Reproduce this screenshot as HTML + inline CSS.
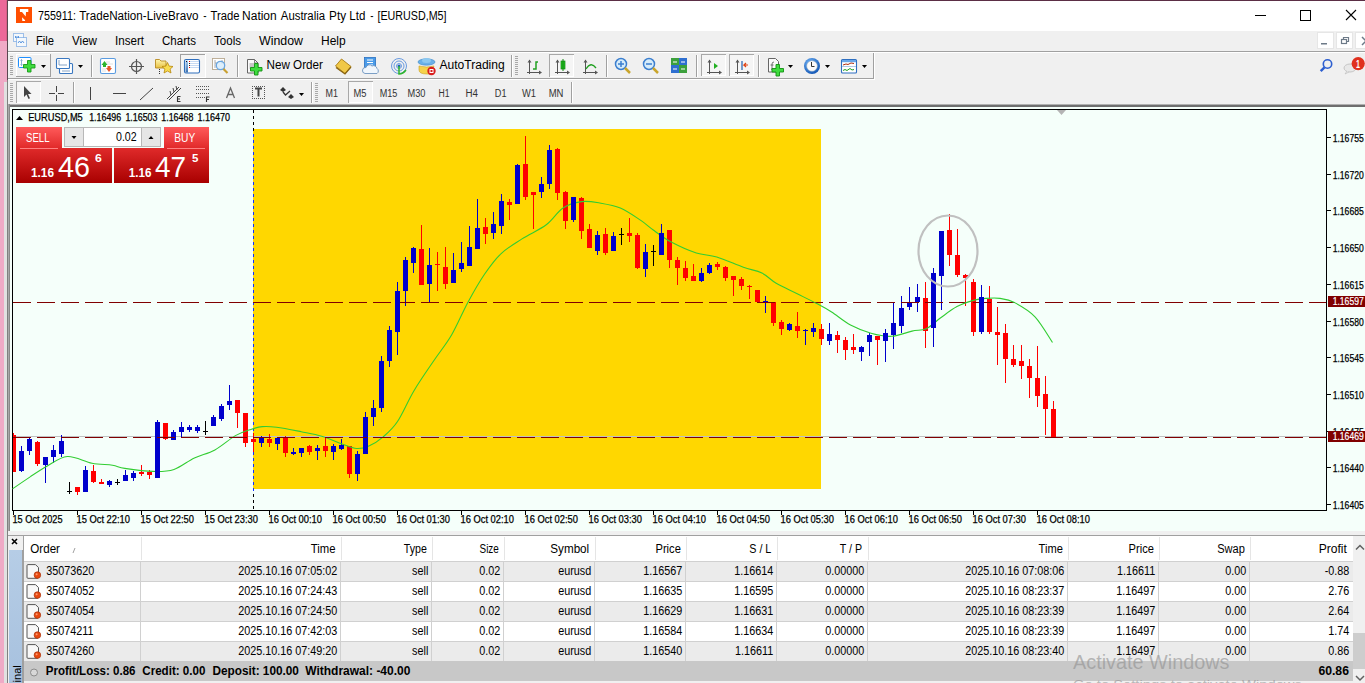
<!DOCTYPE html>
<html><head><meta charset="utf-8"><title>MT4</title><style>html,body{margin:0;padding:0;width:1365px;height:683px;overflow:hidden;background:#F0F0F0}svg{display:block}text{font-family:"Liberation Sans",sans-serif}</style></head><body>
<svg width="1365" height="683" viewBox="0 0 1365 683" font-family="Liberation Sans, sans-serif">
<rect x="0" y="0" width="1365" height="683" fill="#F0F0F0"/>
<rect x="0" y="0" width="7" height="683" fill="#EFAAC6"/>
<rect x="0" y="0" width="7" height="41" fill="#EC6899"/>
<rect x="6" y="0" width="1" height="41" fill="#D86088"/>
<rect x="4" y="82" width="3" height="601" fill="#E1E1E1"/>
<rect x="7" y="0" width="1358" height="1" fill="#5B2E45"/>
<rect x="7" y="0" width="1" height="80" fill="#5A4650"/>
<rect x="7" y="80" width="1" height="603" fill="#808080"/>
<rect x="8" y="1" width="1357" height="30" fill="#FFFFFF"/>
<rect x="16" y="7" width="16" height="16" fill="#FF4E00"/>
<path d="M19.9 9.1 H28.3 V11.9 H26 L25.7 16.4 L22 11.9 H19.9 Z M22 17.2 L25.2 20.2 L24.9 21.1 H22.3 Z" fill="#FFFFFF"/>
<text x="38.00" y="20" font-size="12" fill="#000" textLength="37.89" lengthAdjust="spacingAndGlyphs">755911:</text>
<text x="79.20" y="20" font-size="12" fill="#000" textLength="119.24" lengthAdjust="spacingAndGlyphs">TradeNation-LiveBravo</text>
<text x="203.20" y="20" font-size="12" fill="#000" textLength="3.30" lengthAdjust="spacingAndGlyphs">-</text>
<text x="210.50" y="20" font-size="12" fill="#000" textLength="29.00" lengthAdjust="spacingAndGlyphs">Trade</text>
<text x="242.10" y="20" font-size="12" fill="#000" textLength="34.59" lengthAdjust="spacingAndGlyphs">Nation</text>
<text x="280.80" y="20" font-size="12" fill="#000" textLength="44.29" lengthAdjust="spacingAndGlyphs">Australia</text>
<text x="329.10" y="20" font-size="12" fill="#000" textLength="16.94" lengthAdjust="spacingAndGlyphs">Pty</text>
<text x="349.30" y="20" font-size="12" fill="#000" textLength="16.08" lengthAdjust="spacingAndGlyphs">Ltd</text>
<text x="370.20" y="20" font-size="12" fill="#000" textLength="3.20" lengthAdjust="spacingAndGlyphs">-</text>
<text x="377.50" y="20" font-size="12" fill="#000" textLength="69.04" lengthAdjust="spacingAndGlyphs">[EURUSD,M5]</text>
<rect x="1255" y="15" width="11" height="1" fill="#000"/>
<rect x="1300.5" y="10.5" width="10" height="10" fill="none" stroke="#000" stroke-width="1"/>
<path d="M1346 10 L1356 20 M1356 10 L1346 20" stroke="#000" stroke-width="1.1"/>
<rect x="8" y="31" width="1357" height="20" fill="#F0F0F0"/>
<text x="36.00" y="45" font-size="12" fill="#000" textLength="18.03" lengthAdjust="spacingAndGlyphs">File</text>
<text x="72.00" y="45" font-size="12" fill="#000" textLength="24.99" lengthAdjust="spacingAndGlyphs">View</text>
<text x="115.00" y="45" font-size="12" fill="#000" textLength="29.01" lengthAdjust="spacingAndGlyphs">Insert</text>
<text x="162.00" y="45" font-size="12" fill="#000" textLength="34.04" lengthAdjust="spacingAndGlyphs">Charts</text>
<text x="214.00" y="45" font-size="12" fill="#000" textLength="27.01" lengthAdjust="spacingAndGlyphs">Tools</text>
<text x="259.00" y="45" font-size="12" fill="#000" textLength="43.98" lengthAdjust="spacingAndGlyphs">Window</text>
<text x="321.00" y="45" font-size="12" fill="#000" textLength="24.68" lengthAdjust="spacingAndGlyphs">Help</text>
<g fill="none" stroke="#4A8BDB" stroke-width="1" stroke-dasharray="1 1"><rect x="13.5" y="33.5" width="10" height="8" fill="#F4F8FC"/><rect x="16.5" y="37.5" width="10" height="9" fill="#F4F8FC"/></g>
<path d="M18 43 l1.5 -2 l1.5 2 l1.5 -2 l1.5 2" stroke="#4A8BDB" fill="none" stroke-width="0.9"/><path d="M15 37 h4 M16 36 l-1 1 l1 1 M18 36 l1 1 l-1 1" stroke="#4A8BDB" fill="none" stroke-width="0.8"/>
<rect x="1317.5" y="32.5" width="16" height="16" fill="#FFFFFF" stroke="#E6E6E6"/>
<rect x="1336.5" y="32.5" width="16" height="16" fill="#FFFFFF" stroke="#E6E6E6"/>
<rect x="1355.5" y="32.5" width="16" height="16" fill="#FFFFFF" stroke="#E6E6E6"/>
<rect x="1321" y="43" width="6" height="1.5" fill="#6D7A88"/>
<g fill="none" stroke="#6D7A88" stroke-width="1.2"><rect x="1341.5" y="39.5" width="5" height="4"/><path d="M1343.5 39.5 v-2 h5 v4 h-2"/></g>
<path d="M1362 37 l4 4 l-4 4" stroke="#6D7A88" stroke-width="1.5" fill="none"/>
<rect x="8" y="51" width="1357" height="1" fill="#A0A0A0"/>
<rect x="8" y="52" width="1357" height="1" fill="#FFFFFF"/>
<rect x="8" y="78" width="866" height="1" fill="#A0A0A0"/>
<rect x="8" y="79" width="867" height="1" fill="#FFFFFF"/>
<rect x="873" y="53" width="1" height="26" fill="#A0A0A0"/>
<rect x="874" y="53" width="1" height="26" fill="#FFFFFF"/>
<rect x="10" y="56" width="3" height="1" fill="#A8A8A8"/><rect x="10" y="58" width="3" height="1" fill="#A8A8A8"/><rect x="10" y="60" width="3" height="1" fill="#A8A8A8"/><rect x="10" y="62" width="3" height="1" fill="#A8A8A8"/><rect x="10" y="64" width="3" height="1" fill="#A8A8A8"/><rect x="10" y="66" width="3" height="1" fill="#A8A8A8"/><rect x="10" y="68" width="3" height="1" fill="#A8A8A8"/><rect x="10" y="70" width="3" height="1" fill="#A8A8A8"/><rect x="10" y="72" width="3" height="1" fill="#A8A8A8"/><rect x="10" y="74" width="3" height="1" fill="#A8A8A8"/>
<rect x="16" y="54" width="35" height="23" fill="#A0A0A0"/><rect x="16" y="54" width="34" height="22" fill="#FFFFFF"/><rect x="17" y="55" width="33" height="21" fill="#F0F0F0"/>
<rect x="18.5" y="57.5" width="12.5" height="10" rx="1" fill="#fff" stroke="#1E8FFF"/><path d="M21.5 59.5 v6 M20.5 60.5 l1 -1 l1 1 M20.5 64.5 l1 1 l1 -1" stroke="#7FA8D0" fill="none" stroke-width="0.9"/>
<path d="M27.5 60.5 h3.5 v4 h4 v3.5 h-4 v4 h-3.5 v-4 h-4 v-3.5 h4 z" fill="#3EDC3E" stroke="#179A17" stroke-width="0.9"/>
<path d="M41 65 h5 l-2.5 3 z" fill="#000"/>
<rect x="59.5" y="63.5" width="13" height="10" rx="1" fill="#fff" stroke="#3B78C0" stroke-width="1.1"/><rect x="56.5" y="58.5" width="13" height="10" rx="1" fill="#fff" stroke="#3B78C0" stroke-width="1.1"/>
<path d="M59 60 v5 M59 65 h8 M62 71 h8" stroke="#7A9BC0" stroke-width="0.9" fill="none"/>
<path d="M78 65 h5 l-2.5 3 z" fill="#000"/>
<rect x="91" y="55" width="1" height="22" fill="#A0A0A0"/><rect x="92" y="55" width="1" height="22" fill="#FFFFFF"/>
<rect x="100.5" y="58.5" width="15" height="15" rx="1.5" fill="#fff" stroke="#5A9BE0" stroke-width="1.1"/><path d="M106 62 h4 M106 64 h7 M102 69 h4 M102 71 h4" stroke="#D8D8D8" stroke-width="0.8"/><path d="M101.5 65 l3 -4 l3 4 h-1.5 v2 h-3 v-2 z" fill="#2DB52D"/><path d="M106 68 h1.5 v-2 h3 v2 h1.5 l-3 4 z" fill="#E8572A"/>
<g stroke="#555" fill="none" stroke-width="1.2"><circle cx="136.5" cy="66.5" r="5"/><path d="M136.5 59 v15 M129 66.5 h15"/></g>
<defs><linearGradient id="fold" x1="0" y1="0" x2="0" y2="1"><stop offset="0" stop-color="#FFF6B0"/><stop offset="1" stop-color="#E8C040"/></linearGradient></defs>
<path d="M155.5 59.5 h4 l1.5 1.5 h5 v7 h-10.5 z" fill="url(#fold)" stroke="#B88A20" stroke-width="0.9"/>
<g fill="#333"><rect x="159" y="69" width="1" height="1"/><rect x="159" y="71" width="1" height="1"/><rect x="159" y="73" width="1" height="1"/></g>
<path d="M167.5 62.5 l1.6 3.6 3.9 .4 -2.9 2.6 .9 3.9 -3.5 -2 -3.5 2 .9 -3.9 -2.9 -2.6 3.9 -.4 z" fill="#F8DC50" stroke="#B8860B" stroke-width="0.8"/>
<rect x="180" y="54" width="25" height="23" fill="#F4F4F4"/><rect x="180" y="54" width="25" height="1" fill="#A0A0A0"/><rect x="180" y="54" width="1" height="23" fill="#A0A0A0"/><rect x="205" y="54" width="1" height="23" fill="#FFFFFF"/><rect x="180" y="77" width="26" height="1" fill="#FFFFFF"/>
<defs><linearGradient id="dwl" x1="0" y1="0" x2="0" y2="1"><stop offset="0" stop-color="#A8CCF0"/><stop offset="1" stop-color="#3A70B0"/></linearGradient></defs>
<rect x="184.5" y="59.5" width="15" height="13.5" rx="1.5" fill="#fff" stroke="#2F6EBB" stroke-width="1.1"/><rect x="185.5" y="60.5" width="2.5" height="12" fill="url(#dwl)"/>
<path d="M190 61.5 h9 M190 63.5 h9 M190 65.5 h9 M190 67.5 h9" stroke="#B8D0F0" stroke-width="0.8"/>
<g><rect x="189" y="61" width="1" height="1" fill="#E00"/><rect x="189" y="63" width="1" height="1" fill="#222"/><rect x="189" y="65" width="1" height="1" fill="#222"/><rect x="189" y="67" width="1" height="1" fill="#E00"/><rect x="186" y="61" width="1" height="1" fill="#111"/></g>
<rect x="212.5" y="58.5" width="12" height="11" fill="#fff" stroke="#B8A890" stroke-width="0.9"/><path d="M215 60 v8 M215 63 h3 M222 60 v4" stroke="#999" stroke-width="0.8"/>
<circle cx="220.5" cy="65.5" r="4.2" fill="#D8ECFA" fill-opacity="0.85" stroke="#6AA6E0" stroke-width="1.3"/><path d="M223.5 69 l4 4" stroke="#C8A030" stroke-width="2.2"/>
<rect x="237" y="55" width="1" height="22" fill="#A0A0A0"/><rect x="238" y="55" width="1" height="22" fill="#FFFFFF"/>
<path d="M247.5 59.5 h7 l3.5 3.5 v10 h-10.5 z" fill="#FAFAFA" stroke="#666" stroke-width="1"/><path d="M254.5 59.5 v3.5 h3.5" fill="none" stroke="#666" stroke-width="0.8"/><path d="M249.5 64 h5 M249.5 66 h5 M249.5 68 h3" stroke="#777" stroke-width="0.8"/>
<path d="M254.5 63.5 h3.5 v4 h4 v3.5 h-4 v4 h-3.5 v-4 h-4 v-3.5 h4 z" fill="#3EDC3E" stroke="#129012" stroke-width="0.9"/>
<text x="266.50" y="68.5" font-size="12" fill="#000" textLength="56.41" lengthAdjust="spacingAndGlyphs">New Order</text>
<path d="M335.5 66 l6 -7 l9.5 7.5 l-6 7 z" fill="#F0C848" stroke="#A87C14" stroke-width="0.9"/><path d="M336 67.5 l9 6.5 l6 -7" fill="none" stroke="#8A6410" stroke-width="1.2"/>
<rect x="364.5" y="57.5" width="11" height="11" fill="#4A9BE8" stroke="#2A70C0" stroke-width="0.8"/><path d="M367 60 h6 M367 62.5 h6 M369 65 h4" stroke="#fff" stroke-width="1"/>
<path d="M365 73.5 h12 a3 3 0 0 0 0 -5 a3.5 3.5 0 0 0 -5 -2.5 a3.5 3.5 0 0 0 -6 1.5 a3 3 0 0 0 -1 6 z" fill="#F0F6FC" stroke="#6E95BF" stroke-width="0.9"/>
<g fill="none" stroke="#6A9BE0" stroke-width="1"><circle cx="399" cy="66" r="7.5"/><circle cx="399" cy="66" r="5"/><circle cx="399" cy="66" r="2.5"/></g><circle cx="399" cy="66" r="1.5" fill="#2060C0"/><path d="M399 66 v8 q4 0 7 -4" stroke="#2DB52D" stroke-width="1.5" fill="none"/>
<path d="M419 70 q0 4 8 4 h4 l3 -8 q-7 2 -15 0 z" fill="#F6D24A" stroke="#C8A020" stroke-width="0.6"/><ellipse cx="426.5" cy="62" rx="8.5" ry="3.2" fill="#6AB0E8" stroke="#3C88C8" stroke-width="0.6"/><ellipse cx="426.5" cy="60.5" rx="4.5" ry="2.5" fill="#8CC8F0"/>
<circle cx="431.5" cy="71" r="4.2" fill="#D81E1E"/><rect x="429.5" y="69" width="4" height="4" fill="#fff"/><rect x="430.5" y="70" width="2" height="2" fill="#D81E1E"/>
<text x="439.40" y="68.5" font-size="12" fill="#000" textLength="65.33" lengthAdjust="spacingAndGlyphs">AutoTrading</text>
<rect x="511" y="55" width="1" height="22" fill="#A0A0A0"/><rect x="512" y="55" width="1" height="22" fill="#FFFFFF"/>
<rect x="515" y="56" width="3" height="1" fill="#A8A8A8"/><rect x="515" y="58" width="3" height="1" fill="#A8A8A8"/><rect x="515" y="60" width="3" height="1" fill="#A8A8A8"/><rect x="515" y="62" width="3" height="1" fill="#A8A8A8"/><rect x="515" y="64" width="3" height="1" fill="#A8A8A8"/><rect x="515" y="66" width="3" height="1" fill="#A8A8A8"/><rect x="515" y="68" width="3" height="1" fill="#A8A8A8"/><rect x="515" y="70" width="3" height="1" fill="#A8A8A8"/><rect x="515" y="72" width="3" height="1" fill="#A8A8A8"/><rect x="515" y="74" width="3" height="1" fill="#A8A8A8"/>
<g shape-rendering="crispEdges"><rect x="529" y="60" width="1" height="14" fill="#555"/><rect x="527" y="72" width="14" height="1" fill="#555"/></g><path d="M529.5 59.5 l-2 3 h4 z M542 72.5 l-3 -2 v4 z" fill="#555"/><path d="M533 69 h3 v-7 h2" stroke="#20A020" stroke-width="1.5" fill="none"/>
<rect x="549" y="54" width="25" height="23" fill="#F5F5F5"/><rect x="549" y="54" width="25" height="1" fill="#A8A8A8"/><rect x="549" y="54" width="1" height="23" fill="#A8A8A8"/><rect x="573" y="55" width="1" height="22" fill="#FFFFFF"/><rect x="550" y="76" width="24" height="1" fill="#FFFFFF"/>
<g shape-rendering="crispEdges"><rect x="557" y="60" width="1" height="14" fill="#555"/><rect x="555" y="72" width="14" height="1" fill="#555"/></g><path d="M557.5 59.5 l-2 3 h4 z M570 72.5 l-3 -2 v4 z" fill="#555"/><rect x="561" y="61" width="4" height="8" fill="#22C022" stroke="#118811" stroke-width="0.7"/><path d="M563 59 v12" stroke="#118811"/>
<g shape-rendering="crispEdges"><rect x="585" y="60" width="1" height="14" fill="#555"/><rect x="583" y="72" width="14" height="1" fill="#555"/></g><path d="M585.5 59.5 l-2 3 h4 z M598 72.5 l-3 -2 v4 z" fill="#555"/><path d="M586 69 q5 -8 10 -1" stroke="#20A020" stroke-width="1.3" fill="none"/>
<rect x="606" y="55" width="1" height="22" fill="#A0A0A0"/><rect x="607" y="55" width="1" height="22" fill="#FFFFFF"/>
<circle cx="621" cy="64" r="5.5" fill="#D6ECFA" stroke="#3C7FCF" stroke-width="1.5"/><path d="M618 64 h6 M621 61 v6" stroke="#3C7FCF" stroke-width="1.5"/><path d="M625 68 l5 5" stroke="#C9A52C" stroke-width="2.5"/>
<circle cx="649" cy="64" r="5.5" fill="#D6ECFA" stroke="#3C7FCF" stroke-width="1.5"/><path d="M646 64 h6" stroke="#3C7FCF" stroke-width="1.5"/><path d="M653 68 l5 5" stroke="#C9A52C" stroke-width="2.5"/>
<rect x="671" y="58" width="8" height="7" fill="#3CA03C"/><rect x="679" y="58" width="8" height="7" fill="#2E6FD0"/><rect x="671" y="65" width="8" height="8" fill="#2E6FD0"/><rect x="679" y="65" width="8" height="8" fill="#3CA03C"/>
<path d="M673 62 h4 M681 62 h4 M673 69 h4 M681 69 h4" stroke="#fff" stroke-width="1.2"/>
<rect x="696" y="55" width="1" height="22" fill="#A0A0A0"/><rect x="697" y="55" width="1" height="22" fill="#FFFFFF"/>
<rect x="701" y="54" width="25" height="22" fill="#F5F5F5"/><rect x="701" y="54" width="25" height="1" fill="#A8A8A8"/><rect x="701" y="54" width="1" height="22" fill="#A8A8A8"/><rect x="725" y="55" width="1" height="21" fill="#FFFFFF"/><rect x="702" y="75" width="24" height="1" fill="#FFFFFF"/>
<g shape-rendering="crispEdges"><rect x="709" y="60" width="1" height="14" fill="#555"/><rect x="707" y="72" width="14" height="1" fill="#555"/></g><path d="M709.5 59.5 l-2 3 h4 z M722 72.5 l-3 -2 v4 z" fill="#555"/><path d="M714 63 l4 3 l-4 3 z" fill="#22B022"/>
<rect x="729" y="54" width="25" height="22" fill="#F5F5F5"/><rect x="729" y="54" width="25" height="1" fill="#A8A8A8"/><rect x="729" y="54" width="1" height="22" fill="#A8A8A8"/><rect x="753" y="55" width="1" height="21" fill="#FFFFFF"/><rect x="730" y="75" width="24" height="1" fill="#FFFFFF"/>
<g shape-rendering="crispEdges"><rect x="737" y="60" width="1" height="14" fill="#555"/><rect x="735" y="72" width="14" height="1" fill="#555"/></g><path d="M737.5 59.5 l-2 3 h4 z M750 72.5 l-3 -2 v4 z" fill="#555"/><path d="M742 61 v9" stroke="#2060B0" stroke-width="1.2"/><path d="M748 65 h-4 l2 -2 M744 65 l2 2" stroke="#E04010" stroke-width="1.2" fill="none"/>
<rect x="758" y="55" width="1" height="22" fill="#A0A0A0"/><rect x="759" y="55" width="1" height="22" fill="#FFFFFF"/>
<path d="M768.5 58.5 h7 l3 3 v10.5 h-10 z" fill="#FAFAFA" stroke="#666" stroke-width="1"/><path d="M771 70 q1 0 1 -2 v-4 q0 -2 2 -2 M770.5 65 h3" stroke="#555" stroke-width="0.8" fill="none"/>
<path d="M776 64.5 h3.5 v4 h4 v3.5 h-4 v4 h-3.5 v-4 h-4 v-3.5 h4 z" fill="#3EDC3E" stroke="#129012" stroke-width="0.9"/>
<path d="M788 65 h5 l-2.5 3 z" fill="#000"/>
<defs><radialGradient id="clk" cx="0.4" cy="0.35" r="0.7"><stop offset="0" stop-color="#7FC0FF"/><stop offset="1" stop-color="#0A4FB0"/></radialGradient></defs>
<circle cx="812" cy="66" r="8" fill="url(#clk)"/><circle cx="812" cy="66" r="5.3" fill="#FAFAFA" stroke="#9AB" stroke-width="0.5"/><path d="M811.5 62 v4.5 h3" stroke="#333" stroke-width="1" fill="none"/>
<path d="M825 65 h5 l-2.5 3 z" fill="#000"/>
<rect x="841.5" y="59.5" width="15" height="13.5" rx="1" fill="#fff" stroke="#2E6FC0" stroke-width="1.1"/><rect x="842" y="60" width="14" height="2.2" fill="#6AA8EA"/><path d="M842 66.5 h14" stroke="#9BBCE0" stroke-width="0.8"/>
<path d="M843 65 l3 -1 l2 .5 l3 -1.5 l3 .5" stroke="#B03010" fill="none" stroke-width="1"/><path d="M843 70.5 l2 -1 l2 1 l3 -2 l2 1.5 l2 -.5" stroke="#20A020" fill="none" stroke-width="1"/>
<path d="M862 65 h5 l-2.5 3 z" fill="#000"/>
<circle cx="1327.5" cy="64" r="4.2" fill="none" stroke="#2D5FD0" stroke-width="1.6"/><path d="M1324.5 67.3 l-3.8 3.8" stroke="#2D5FD0" stroke-width="2.4"/>
<ellipse cx="1350" cy="68" rx="6" ry="4" fill="#E8E8E8" stroke="#BBB" stroke-width="0.8"/><path d="M1347 71 l-2 3 l4 -2" fill="#E8E8E8" stroke="#BBB" stroke-width="0.6"/><circle cx="1358.2" cy="63.6" r="6.6" fill="#E0301E"/>
<text x="1356.00" y="68" font-size="10" font-weight="bold" fill="#fff" textLength="3.97" lengthAdjust="spacingAndGlyphs">1</text>
<rect x="10" y="83" width="3" height="1" fill="#A8A8A8"/><rect x="10" y="85" width="3" height="1" fill="#A8A8A8"/><rect x="10" y="87" width="3" height="1" fill="#A8A8A8"/><rect x="10" y="89" width="3" height="1" fill="#A8A8A8"/><rect x="10" y="91" width="3" height="1" fill="#A8A8A8"/><rect x="10" y="93" width="3" height="1" fill="#A8A8A8"/><rect x="10" y="95" width="3" height="1" fill="#A8A8A8"/><rect x="10" y="97" width="3" height="1" fill="#A8A8A8"/><rect x="10" y="99" width="3" height="1" fill="#A8A8A8"/><rect x="10" y="101" width="3" height="1" fill="#A8A8A8"/>
<rect x="16" y="81" width="25" height="22" fill="#F5F5F5"/><rect x="16" y="81" width="25" height="1" fill="#A8A8A8"/><rect x="16" y="81" width="1" height="22" fill="#A8A8A8"/><rect x="40" y="82" width="1" height="21" fill="#FFFFFF"/><rect x="17" y="102" width="24" height="1" fill="#FFFFFF"/>
<path d="M24 86 v11 l2.5 -2.5 l2 4.5 l1.5 -0.8 l-2 -4.3 h3.5 z" fill="#444"/>
<path d="M49 93.5 h6 M58 93.5 h6 M56.5 86 v6 M56.5 95 v6" stroke="#444" stroke-width="1"/>
<rect x="73" y="82" width="1" height="21" fill="#A0A0A0"/><rect x="74" y="82" width="1" height="21" fill="#FFFFFF"/>
<rect x="90" y="87" width="1" height="13" fill="#444"/>
<rect x="113" y="93" width="13" height="1" fill="#444"/>
<path d="M140 100 l13 -12" stroke="#444" stroke-width="1"/>
<g shape-rendering="crispEdges"><rect x="167" y="98" width="1" height="1" fill="#444"/><rect x="169" y="99" width="1" height="1" fill="#444"/><rect x="168" y="97" width="1" height="1" fill="#444"/><rect x="170" y="98" width="1" height="1" fill="#444"/><rect x="169" y="96" width="1" height="1" fill="#444"/><rect x="171" y="97" width="1" height="1" fill="#444"/><rect x="170" y="95" width="1" height="1" fill="#444"/><rect x="172" y="96" width="1" height="1" fill="#444"/><rect x="171" y="94" width="1" height="1" fill="#444"/><rect x="173" y="95" width="1" height="1" fill="#444"/><rect x="172" y="93" width="1" height="1" fill="#444"/><rect x="174" y="94" width="1" height="1" fill="#444"/><rect x="173" y="92" width="1" height="1" fill="#444"/><rect x="175" y="93" width="1" height="1" fill="#444"/><rect x="174" y="91" width="1" height="1" fill="#444"/><rect x="176" y="92" width="1" height="1" fill="#444"/><rect x="175" y="90" width="1" height="1" fill="#444"/><rect x="177" y="91" width="1" height="1" fill="#444"/><rect x="176" y="89" width="1" height="1" fill="#444"/><rect x="178" y="90" width="1" height="1" fill="#444"/><rect x="177" y="88" width="1" height="1" fill="#444"/><rect x="179" y="89" width="1" height="1" fill="#444"/><rect x="178" y="87" width="1" height="1" fill="#444"/><rect x="180" y="88" width="1" height="1" fill="#444"/></g>
<path d="M170 91 l1 4 M173 88 l1 4 M176 86 l1 4" stroke="#444" stroke-width="1"/>
<path d="M177.5 96.5 h3 M177.5 96.5 v5 h3 M177.5 99 h2.5" stroke="#333" stroke-width="1.1" fill="none"/>
<g shape-rendering="crispEdges" fill="#555"><rect x="196" y="86" width="1" height="1"/><rect x="198" y="86" width="1" height="1"/><rect x="200" y="86" width="1" height="1"/><rect x="202" y="86" width="1" height="1"/><rect x="204" y="86" width="1" height="1"/><rect x="206" y="86" width="1" height="1"/><rect x="208" y="86" width="1" height="1"/><rect x="196" y="89" width="1" height="1"/><rect x="198" y="89" width="1" height="1"/><rect x="200" y="89" width="1" height="1"/><rect x="202" y="89" width="1" height="1"/><rect x="204" y="89" width="1" height="1"/><rect x="206" y="89" width="1" height="1"/><rect x="208" y="89" width="1" height="1"/><rect x="196" y="93" width="1" height="1"/><rect x="198" y="93" width="1" height="1"/><rect x="200" y="93" width="1" height="1"/><rect x="202" y="93" width="1" height="1"/><rect x="204" y="93" width="1" height="1"/><rect x="206" y="93" width="1" height="1"/><rect x="208" y="93" width="1" height="1"/><rect x="196" y="97" width="1" height="1"/><rect x="198" y="97" width="1" height="1"/><rect x="200" y="97" width="1" height="1"/><rect x="202" y="97" width="1" height="1"/><rect x="204" y="97" width="1" height="1"/></g>
<path d="M206.5 102 v-5 h3 M206.5 99.5 h2.5" stroke="#333" stroke-width="1.1" fill="none"/>
<path d="M226.5 98 l4 -10 l4 10 M228 94.5 h5" stroke="#666" stroke-width="1.3" fill="none"/>
<g shape-rendering="crispEdges" fill="#555"><rect x="252" y="86" width="1" height="1"/><rect x="252" y="98" width="1" height="1"/><rect x="252" y="86" width="1" height="1"/><rect x="264" y="86" width="1" height="1"/><rect x="254" y="86" width="1" height="1"/><rect x="254" y="98" width="1" height="1"/><rect x="252" y="88" width="1" height="1"/><rect x="264" y="88" width="1" height="1"/><rect x="256" y="86" width="1" height="1"/><rect x="256" y="98" width="1" height="1"/><rect x="252" y="90" width="1" height="1"/><rect x="264" y="90" width="1" height="1"/><rect x="258" y="86" width="1" height="1"/><rect x="258" y="98" width="1" height="1"/><rect x="252" y="92" width="1" height="1"/><rect x="264" y="92" width="1" height="1"/><rect x="260" y="86" width="1" height="1"/><rect x="260" y="98" width="1" height="1"/><rect x="252" y="94" width="1" height="1"/><rect x="264" y="94" width="1" height="1"/><rect x="262" y="86" width="1" height="1"/><rect x="262" y="98" width="1" height="1"/><rect x="252" y="96" width="1" height="1"/><rect x="264" y="96" width="1" height="1"/><rect x="264" y="86" width="1" height="1"/><rect x="264" y="98" width="1" height="1"/><rect x="252" y="98" width="1" height="1"/><rect x="264" y="98" width="1" height="1"/></g>
<path d="M255 88.5 h7 M258.5 88.5 v8" stroke="#444" stroke-width="2" fill="none"/>
<path d="M280 90 l3 -3 l3 3 l-3 2 z M288 97 l3 -3 l3 3 l-3 2 z" fill="#333"/><path d="M283 92 l2.5 3 l4.5 -4" stroke="#333" stroke-width="1.3" fill="none"/>
<path d="M299 93 h5 l-2.5 3 z" fill="#000"/>
<rect x="311" y="82" width="1" height="21" fill="#A0A0A0"/><rect x="312" y="82" width="1" height="21" fill="#FFFFFF"/>
<rect x="315" y="83" width="3" height="1" fill="#A8A8A8"/><rect x="315" y="85" width="3" height="1" fill="#A8A8A8"/><rect x="315" y="87" width="3" height="1" fill="#A8A8A8"/><rect x="315" y="89" width="3" height="1" fill="#A8A8A8"/><rect x="315" y="91" width="3" height="1" fill="#A8A8A8"/><rect x="315" y="93" width="3" height="1" fill="#A8A8A8"/><rect x="315" y="95" width="3" height="1" fill="#A8A8A8"/><rect x="315" y="97" width="3" height="1" fill="#A8A8A8"/><rect x="315" y="99" width="3" height="1" fill="#A8A8A8"/><rect x="315" y="101" width="3" height="1" fill="#A8A8A8"/>
<rect x="348" y="81" width="25" height="22" fill="#F5F5F5"/><rect x="348" y="81" width="25" height="1" fill="#A8A8A8"/><rect x="348" y="81" width="1" height="22" fill="#A8A8A8"/><rect x="372" y="82" width="1" height="21" fill="#FFFFFF"/><rect x="349" y="102" width="24" height="1" fill="#FFFFFF"/>
<text x="325.60" y="96.8" font-size="10" fill="#333" textLength="12.39" lengthAdjust="spacingAndGlyphs">M1</text>
<text x="353.50" y="96.8" font-size="10" fill="#333" textLength="12.99" lengthAdjust="spacingAndGlyphs">M5</text>
<text x="379.70" y="96.8" font-size="10" fill="#333" textLength="17.66" lengthAdjust="spacingAndGlyphs">M15</text>
<text x="407.50" y="96.8" font-size="10" fill="#333" textLength="17.96" lengthAdjust="spacingAndGlyphs">M30</text>
<text x="438.50" y="96.8" font-size="10" fill="#333" textLength="10.99" lengthAdjust="spacingAndGlyphs">H1</text>
<text x="465.50" y="96.8" font-size="10" fill="#333" textLength="12.48" lengthAdjust="spacingAndGlyphs">H4</text>
<text x="494.80" y="96.8" font-size="10" fill="#333" textLength="11.68" lengthAdjust="spacingAndGlyphs">D1</text>
<text x="522.00" y="96.8" font-size="10" fill="#333" textLength="14.00" lengthAdjust="spacingAndGlyphs">W1</text>
<text x="548.70" y="96.8" font-size="10" fill="#333" textLength="14.75" lengthAdjust="spacingAndGlyphs">MN</text>
<rect x="571" y="82" width="1" height="21" fill="#A0A0A0"/><rect x="572" y="82" width="1" height="21" fill="#FFFFFF"/>
<rect x="8" y="104" width="1357" height="1" fill="#B0B0B0"/>
<rect x="8" y="105" width="1357" height="2" fill="#6E6E6E"/>
<rect x="8" y="104" width="2" height="427" fill="#8A8A8A"/><rect x="8" y="104" width="1" height="427" fill="#A8A8A8"/>
<rect x="10" y="107" width="1355" height="424" fill="#F5FFFA"/>
<rect x="253" y="129" width="568" height="360" fill="#FFD700"/>
<rect x="12" y="109" width="1315" height="1" fill="#000"/>
<rect x="12" y="510" width="1315" height="1" fill="#000"/>
<rect x="12" y="109" width="1" height="402" fill="#000"/>
<rect x="1326" y="109" width="1" height="402" fill="#000"/>
<path d="M1057 110 h9 l-4.5 5 z" fill="#B4B4B4"/>
<rect x="253" y="110" width="1" height="3" fill="#000"/><rect x="253" y="116" width="1" height="3" fill="#000"/><rect x="253" y="122" width="1" height="3" fill="#000"/><rect x="253" y="128" width="1" height="3" fill="#000"/><rect x="253" y="134" width="1" height="3" fill="#1030FF"/><rect x="253" y="140" width="1" height="3" fill="#1030FF"/><rect x="253" y="146" width="1" height="3" fill="#1030FF"/><rect x="253" y="152" width="1" height="3" fill="#1030FF"/><rect x="253" y="158" width="1" height="3" fill="#1030FF"/><rect x="253" y="164" width="1" height="3" fill="#1030FF"/><rect x="253" y="170" width="1" height="3" fill="#1030FF"/><rect x="253" y="176" width="1" height="3" fill="#1030FF"/><rect x="253" y="182" width="1" height="3" fill="#1030FF"/><rect x="253" y="188" width="1" height="3" fill="#1030FF"/><rect x="253" y="194" width="1" height="3" fill="#1030FF"/><rect x="253" y="200" width="1" height="3" fill="#1030FF"/><rect x="253" y="206" width="1" height="3" fill="#1030FF"/><rect x="253" y="212" width="1" height="3" fill="#1030FF"/><rect x="253" y="218" width="1" height="3" fill="#1030FF"/><rect x="253" y="224" width="1" height="3" fill="#1030FF"/><rect x="253" y="230" width="1" height="3" fill="#1030FF"/><rect x="253" y="236" width="1" height="3" fill="#1030FF"/><rect x="253" y="242" width="1" height="3" fill="#1030FF"/><rect x="253" y="248" width="1" height="3" fill="#1030FF"/><rect x="253" y="254" width="1" height="3" fill="#1030FF"/><rect x="253" y="260" width="1" height="3" fill="#1030FF"/><rect x="253" y="266" width="1" height="3" fill="#1030FF"/><rect x="253" y="272" width="1" height="3" fill="#1030FF"/><rect x="253" y="278" width="1" height="3" fill="#1030FF"/><rect x="253" y="284" width="1" height="3" fill="#1030FF"/><rect x="253" y="290" width="1" height="3" fill="#1030FF"/><rect x="253" y="296" width="1" height="3" fill="#1030FF"/><rect x="253" y="302" width="1" height="3" fill="#1030FF"/><rect x="253" y="308" width="1" height="3" fill="#1030FF"/><rect x="253" y="314" width="1" height="3" fill="#1030FF"/><rect x="253" y="320" width="1" height="3" fill="#1030FF"/><rect x="253" y="326" width="1" height="3" fill="#1030FF"/><rect x="253" y="332" width="1" height="3" fill="#1030FF"/><rect x="253" y="338" width="1" height="3" fill="#1030FF"/><rect x="253" y="344" width="1" height="3" fill="#1030FF"/><rect x="253" y="350" width="1" height="3" fill="#1030FF"/><rect x="253" y="356" width="1" height="3" fill="#1030FF"/><rect x="253" y="362" width="1" height="3" fill="#1030FF"/><rect x="253" y="368" width="1" height="3" fill="#1030FF"/><rect x="253" y="374" width="1" height="3" fill="#1030FF"/><rect x="253" y="380" width="1" height="3" fill="#1030FF"/><rect x="253" y="386" width="1" height="3" fill="#1030FF"/><rect x="253" y="392" width="1" height="3" fill="#1030FF"/><rect x="253" y="398" width="1" height="3" fill="#1030FF"/><rect x="253" y="404" width="1" height="3" fill="#1030FF"/><rect x="253" y="410" width="1" height="3" fill="#1030FF"/><rect x="253" y="416" width="1" height="3" fill="#1030FF"/><rect x="253" y="422" width="1" height="3" fill="#1030FF"/><rect x="253" y="428" width="1" height="3" fill="#1030FF"/><rect x="253" y="434" width="1" height="3" fill="#1030FF"/><rect x="253" y="440" width="1" height="3" fill="#1030FF"/><rect x="253" y="446" width="1" height="3" fill="#1030FF"/><rect x="253" y="452" width="1" height="3" fill="#1030FF"/><rect x="253" y="458" width="1" height="3" fill="#1030FF"/><rect x="253" y="464" width="1" height="3" fill="#1030FF"/><rect x="253" y="470" width="1" height="3" fill="#1030FF"/><rect x="253" y="476" width="1" height="3" fill="#1030FF"/><rect x="253" y="482" width="1" height="3" fill="#1030FF"/><rect x="253" y="488" width="1" height="3" fill="#1030FF"/><rect x="253" y="494" width="1" height="3" fill="#000"/><rect x="253" y="500" width="1" height="3" fill="#000"/><rect x="253" y="506" width="1" height="3" fill="#000"/>
<rect x="13" y="436" width="1313" height="1" fill="#C0C0C0"/>
<g shape-rendering="crispEdges"><rect x="13" y="433" width="1" height="39" fill="#FF0000"/><rect x="13" y="435" width="3" height="37" fill="#FF0000"/><rect x="37" y="441" width="1" height="25" fill="#FF0000"/><rect x="35" y="442" width="5" height="22" fill="#FF0000"/><rect x="69" y="482" width="1" height="12" fill="#000000"/><rect x="67" y="491" width="5" height="1" fill="#000000"/><rect x="77" y="487" width="1" height="8" fill="#FF0000"/><rect x="75" y="487" width="5" height="5" fill="#FF0000"/><rect x="93" y="465" width="1" height="18" fill="#FF0000"/><rect x="91" y="471" width="5" height="11" fill="#FF0000"/><rect x="101" y="479" width="1" height="5" fill="#FF0000"/><rect x="99" y="482" width="5" height="2" fill="#FF0000"/><rect x="117" y="479" width="1" height="6" fill="#000000"/><rect x="115" y="482" width="5" height="1" fill="#000000"/><rect x="141" y="465" width="1" height="11" fill="#FF0000"/><rect x="139" y="472" width="5" height="2" fill="#FF0000"/><rect x="149" y="470" width="1" height="9" fill="#FF0000"/><rect x="147" y="472" width="5" height="3" fill="#FF0000"/><rect x="165" y="423" width="1" height="17" fill="#FF0000"/><rect x="163" y="423" width="5" height="16" fill="#FF0000"/><rect x="205" y="421" width="1" height="14" fill="#000000"/><rect x="203" y="431" width="5" height="1" fill="#000000"/><rect x="237" y="400" width="1" height="28" fill="#FF0000"/><rect x="235" y="400" width="5" height="13" fill="#FF0000"/><rect x="245" y="413" width="1" height="34" fill="#FF0000"/><rect x="243" y="413" width="5" height="30" fill="#FF0000"/><rect x="253" y="433" width="1" height="19" fill="#FF0000"/><rect x="251" y="439" width="5" height="3" fill="#FF0000"/><rect x="269" y="434" width="1" height="13" fill="#FF0000"/><rect x="267" y="439" width="5" height="4" fill="#FF0000"/><rect x="285" y="436" width="1" height="21" fill="#FF0000"/><rect x="283" y="438" width="5" height="15" fill="#FF0000"/><rect x="309" y="445" width="1" height="10" fill="#FF0000"/><rect x="307" y="446" width="5" height="6" fill="#FF0000"/><rect x="325" y="437" width="1" height="20" fill="#FF0000"/><rect x="323" y="446" width="5" height="5" fill="#FF0000"/><rect x="349" y="446" width="1" height="32" fill="#FF0000"/><rect x="347" y="446" width="5" height="28" fill="#FF0000"/><rect x="421" y="225" width="1" height="60" fill="#FF0000"/><rect x="419" y="249" width="5" height="36" fill="#FF0000"/><rect x="437" y="252" width="1" height="39" fill="#FF0000"/><rect x="435" y="264" width="5" height="1" fill="#FF0000"/><rect x="445" y="247" width="1" height="42" fill="#FF0000"/><rect x="443" y="267" width="5" height="17" fill="#FF0000"/><rect x="485" y="218" width="1" height="26" fill="#FF0000"/><rect x="483" y="227" width="5" height="7" fill="#FF0000"/><rect x="509" y="199" width="1" height="21" fill="#FF0000"/><rect x="507" y="202" width="5" height="3" fill="#FF0000"/><rect x="525" y="136" width="1" height="64" fill="#FF0000"/><rect x="523" y="164" width="5" height="33" fill="#FF0000"/><rect x="533" y="192" width="1" height="37" fill="#FF0000"/><rect x="531" y="192" width="5" height="3" fill="#FF0000"/><rect x="557" y="148" width="1" height="52" fill="#FF0000"/><rect x="555" y="149" width="5" height="44" fill="#FF0000"/><rect x="565" y="191" width="1" height="38" fill="#FF0000"/><rect x="563" y="192" width="5" height="29" fill="#FF0000"/><rect x="581" y="197" width="1" height="42" fill="#FF0000"/><rect x="579" y="198" width="5" height="33" fill="#FF0000"/><rect x="589" y="224" width="1" height="24" fill="#FF0000"/><rect x="587" y="229" width="5" height="19" fill="#FF0000"/><rect x="605" y="228" width="1" height="27" fill="#FF0000"/><rect x="603" y="234" width="5" height="19" fill="#FF0000"/><rect x="621" y="228" width="1" height="17" fill="#000000"/><rect x="619" y="234" width="5" height="1" fill="#000000"/><rect x="629" y="218" width="1" height="24" fill="#FF0000"/><rect x="627" y="233" width="5" height="3" fill="#FF0000"/><rect x="637" y="233" width="1" height="36" fill="#FF0000"/><rect x="635" y="235" width="5" height="33" fill="#FF0000"/><rect x="653" y="245" width="1" height="21" fill="#000000"/><rect x="651" y="251" width="5" height="1" fill="#000000"/><rect x="669" y="230" width="1" height="38" fill="#FF0000"/><rect x="667" y="230" width="5" height="30" fill="#FF0000"/><rect x="677" y="257" width="1" height="28" fill="#FF0000"/><rect x="675" y="260" width="5" height="8" fill="#FF0000"/><rect x="685" y="261" width="1" height="20" fill="#FF0000"/><rect x="683" y="268" width="5" height="10" fill="#FF0000"/><rect x="693" y="264" width="1" height="17" fill="#FF0000"/><rect x="691" y="276" width="5" height="5" fill="#FF0000"/><rect x="717" y="262" width="1" height="8" fill="#FF0000"/><rect x="715" y="264" width="5" height="3" fill="#FF0000"/><rect x="725" y="266" width="1" height="15" fill="#FF0000"/><rect x="723" y="267" width="5" height="11" fill="#FF0000"/><rect x="733" y="276" width="1" height="20" fill="#FF0000"/><rect x="731" y="276" width="5" height="4" fill="#FF0000"/><rect x="741" y="277" width="1" height="13" fill="#FF0000"/><rect x="739" y="279" width="5" height="7" fill="#FF0000"/><rect x="749" y="285" width="1" height="14" fill="#FF0000"/><rect x="747" y="286" width="5" height="1" fill="#FF0000"/><rect x="757" y="290" width="1" height="13" fill="#FF0000"/><rect x="755" y="290" width="5" height="12" fill="#FF0000"/><rect x="773" y="302" width="1" height="24" fill="#FF0000"/><rect x="771" y="302" width="5" height="21" fill="#FF0000"/><rect x="781" y="320" width="1" height="15" fill="#FF0000"/><rect x="779" y="322" width="5" height="7" fill="#FF0000"/><rect x="797" y="312" width="1" height="26" fill="#FF0000"/><rect x="795" y="326" width="5" height="5" fill="#FF0000"/><rect x="821" y="324" width="1" height="21" fill="#FF0000"/><rect x="819" y="329" width="5" height="10" fill="#FF0000"/><rect x="837" y="331" width="1" height="22" fill="#FF0000"/><rect x="835" y="335" width="5" height="5" fill="#FF0000"/><rect x="845" y="337" width="1" height="23" fill="#FF0000"/><rect x="843" y="340" width="5" height="10" fill="#FF0000"/><rect x="853" y="334" width="1" height="20" fill="#FF0000"/><rect x="851" y="347" width="5" height="3" fill="#FF0000"/><rect x="877" y="336" width="1" height="29" fill="#FF0000"/><rect x="875" y="336" width="5" height="4" fill="#FF0000"/><rect x="925" y="282" width="1" height="66" fill="#FF0000"/><rect x="923" y="298" width="5" height="33" fill="#FF0000"/><rect x="949" y="214" width="1" height="52" fill="#FF0000"/><rect x="947" y="230" width="5" height="25" fill="#FF0000"/><rect x="957" y="229" width="1" height="48" fill="#FF0000"/><rect x="955" y="255" width="5" height="20" fill="#FF0000"/><rect x="965" y="274" width="1" height="32" fill="#FF0000"/><rect x="963" y="275" width="5" height="3" fill="#FF0000"/><rect x="973" y="279" width="1" height="57" fill="#FF0000"/><rect x="971" y="282" width="5" height="50" fill="#FF0000"/><rect x="989" y="286" width="1" height="48" fill="#FF0000"/><rect x="987" y="299" width="5" height="33" fill="#FF0000"/><rect x="997" y="307" width="1" height="58" fill="#FF0000"/><rect x="995" y="332" width="5" height="3" fill="#FF0000"/><rect x="1005" y="324" width="1" height="59" fill="#FF0000"/><rect x="1003" y="333" width="5" height="26" fill="#FF0000"/><rect x="1013" y="345" width="1" height="22" fill="#FF0000"/><rect x="1011" y="359" width="5" height="6" fill="#FF0000"/><rect x="1021" y="345" width="1" height="34" fill="#FF0000"/><rect x="1019" y="361" width="5" height="5" fill="#FF0000"/><rect x="1029" y="359" width="1" height="39" fill="#FF0000"/><rect x="1027" y="366" width="5" height="12" fill="#FF0000"/><rect x="1037" y="346" width="1" height="61" fill="#FF0000"/><rect x="1035" y="378" width="5" height="18" fill="#FF0000"/><rect x="1045" y="376" width="1" height="59" fill="#FF0000"/><rect x="1043" y="394" width="5" height="15" fill="#FF0000"/><rect x="1053" y="401" width="1" height="37" fill="#FF0000"/><rect x="1051" y="409" width="5" height="29" fill="#FF0000"/></g>
<g shape-rendering="crispEdges"><rect x="21" y="446" width="1" height="26" fill="#0000CC"/><rect x="29" y="438" width="1" height="17" fill="#0000CC"/><rect x="45" y="457" width="1" height="26" fill="#0000CC"/><rect x="53" y="445" width="1" height="18" fill="#0000CC"/><rect x="61" y="435" width="1" height="22" fill="#0000CC"/><rect x="85" y="466" width="1" height="26" fill="#0000CC"/><rect x="109" y="480" width="1" height="7" fill="#0000CC"/><rect x="125" y="470" width="1" height="11" fill="#0000CC"/><rect x="133" y="471" width="1" height="10" fill="#0000CC"/><rect x="157" y="420" width="1" height="58" fill="#0000CC"/><rect x="173" y="430" width="1" height="10" fill="#0000CC"/><rect x="181" y="422" width="1" height="15" fill="#0000CC"/><rect x="189" y="425" width="1" height="7" fill="#0000CC"/><rect x="197" y="425" width="1" height="8" fill="#0000CC"/><rect x="213" y="415" width="1" height="11" fill="#0000CC"/><rect x="221" y="404" width="1" height="17" fill="#0000CC"/><rect x="229" y="385" width="1" height="25" fill="#0000CC"/><rect x="261" y="436" width="1" height="11" fill="#0000CC"/><rect x="277" y="437" width="1" height="13" fill="#0000CC"/><rect x="293" y="448" width="1" height="7" fill="#0000CC"/><rect x="301" y="448" width="1" height="9" fill="#0000CC"/><rect x="317" y="445" width="1" height="15" fill="#0000CC"/><rect x="333" y="444" width="1" height="16" fill="#0000CC"/><rect x="341" y="439" width="1" height="11" fill="#0000CC"/><rect x="357" y="451" width="1" height="30" fill="#0000CC"/><rect x="365" y="412" width="1" height="42" fill="#0000CC"/><rect x="373" y="400" width="1" height="26" fill="#0000CC"/><rect x="381" y="356" width="1" height="56" fill="#0000CC"/><rect x="389" y="326" width="1" height="41" fill="#0000CC"/><rect x="397" y="282" width="1" height="73" fill="#0000CC"/><rect x="405" y="257" width="1" height="49" fill="#0000CC"/><rect x="413" y="247" width="1" height="26" fill="#0000CC"/><rect x="429" y="248" width="1" height="54" fill="#0000CC"/><rect x="453" y="253" width="1" height="30" fill="#0000CC"/><rect x="461" y="242" width="1" height="30" fill="#0000CC"/><rect x="469" y="226" width="1" height="40" fill="#0000CC"/><rect x="477" y="199" width="1" height="50" fill="#0000CC"/><rect x="493" y="212" width="1" height="27" fill="#0000CC"/><rect x="501" y="194" width="1" height="40" fill="#0000CC"/><rect x="517" y="164" width="1" height="40" fill="#0000CC"/><rect x="541" y="177" width="1" height="21" fill="#0000CC"/><rect x="549" y="145" width="1" height="44" fill="#0000CC"/><rect x="573" y="197" width="1" height="25" fill="#0000CC"/><rect x="597" y="231" width="1" height="24" fill="#0000CC"/><rect x="613" y="232" width="1" height="19" fill="#0000CC"/><rect x="645" y="244" width="1" height="33" fill="#0000CC"/><rect x="661" y="224" width="1" height="31" fill="#0000CC"/><rect x="701" y="268" width="1" height="14" fill="#0000CC"/><rect x="709" y="263" width="1" height="11" fill="#0000CC"/><rect x="765" y="296" width="1" height="17" fill="#0000CC"/><rect x="789" y="323" width="1" height="8" fill="#0000CC"/><rect x="805" y="329" width="1" height="16" fill="#0000CC"/><rect x="813" y="323" width="1" height="14" fill="#0000CC"/><rect x="829" y="323" width="1" height="22" fill="#0000CC"/><rect x="861" y="346" width="1" height="15" fill="#0000CC"/><rect x="869" y="333" width="1" height="23" fill="#0000CC"/><rect x="885" y="329" width="1" height="33" fill="#0000CC"/><rect x="893" y="303" width="1" height="46" fill="#0000CC"/><rect x="901" y="296" width="1" height="37" fill="#0000CC"/><rect x="909" y="287" width="1" height="23" fill="#0000CC"/><rect x="917" y="284" width="1" height="28" fill="#0000CC"/><rect x="933" y="268" width="1" height="79" fill="#0000CC"/><rect x="941" y="231" width="1" height="79" fill="#0000CC"/><rect x="981" y="285" width="1" height="49" fill="#0000CC"/></g>
<rect x="13" y="302" width="18" height="1" fill="#800000"/><rect x="37" y="302" width="18" height="1" fill="#800000"/><rect x="61" y="302" width="18" height="1" fill="#800000"/><rect x="85" y="302" width="18" height="1" fill="#800000"/><rect x="109" y="302" width="18" height="1" fill="#800000"/><rect x="133" y="302" width="18" height="1" fill="#800000"/><rect x="157" y="302" width="18" height="1" fill="#800000"/><rect x="181" y="302" width="18" height="1" fill="#800000"/><rect x="205" y="302" width="18" height="1" fill="#800000"/><rect x="229" y="302" width="18" height="1" fill="#800000"/><rect x="253" y="302" width="18" height="1" fill="#800000"/><rect x="277" y="302" width="18" height="1" fill="#800000"/><rect x="301" y="302" width="18" height="1" fill="#800000"/><rect x="325" y="302" width="18" height="1" fill="#800000"/><rect x="349" y="302" width="18" height="1" fill="#800000"/><rect x="373" y="302" width="18" height="1" fill="#800000"/><rect x="397" y="302" width="18" height="1" fill="#800000"/><rect x="421" y="302" width="18" height="1" fill="#800000"/><rect x="445" y="302" width="18" height="1" fill="#800000"/><rect x="469" y="302" width="18" height="1" fill="#800000"/><rect x="493" y="302" width="18" height="1" fill="#800000"/><rect x="517" y="302" width="18" height="1" fill="#800000"/><rect x="541" y="302" width="18" height="1" fill="#800000"/><rect x="565" y="302" width="18" height="1" fill="#800000"/><rect x="589" y="302" width="18" height="1" fill="#800000"/><rect x="613" y="302" width="18" height="1" fill="#800000"/><rect x="637" y="302" width="18" height="1" fill="#800000"/><rect x="661" y="302" width="18" height="1" fill="#800000"/><rect x="685" y="302" width="18" height="1" fill="#800000"/><rect x="709" y="302" width="18" height="1" fill="#800000"/><rect x="733" y="302" width="18" height="1" fill="#800000"/><rect x="757" y="302" width="18" height="1" fill="#800000"/><rect x="781" y="302" width="18" height="1" fill="#800000"/><rect x="805" y="302" width="18" height="1" fill="#800000"/><rect x="829" y="302" width="18" height="1" fill="#800000"/><rect x="853" y="302" width="18" height="1" fill="#800000"/><rect x="877" y="302" width="18" height="1" fill="#800000"/><rect x="901" y="302" width="18" height="1" fill="#800000"/><rect x="925" y="302" width="18" height="1" fill="#800000"/><rect x="949" y="302" width="18" height="1" fill="#800000"/><rect x="973" y="302" width="18" height="1" fill="#800000"/><rect x="997" y="302" width="18" height="1" fill="#800000"/><rect x="1021" y="302" width="18" height="1" fill="#800000"/><rect x="1045" y="302" width="18" height="1" fill="#800000"/><rect x="1069" y="302" width="18" height="1" fill="#800000"/><rect x="1093" y="302" width="18" height="1" fill="#800000"/><rect x="1117" y="302" width="18" height="1" fill="#800000"/><rect x="1141" y="302" width="18" height="1" fill="#800000"/><rect x="1165" y="302" width="18" height="1" fill="#800000"/><rect x="1189" y="302" width="18" height="1" fill="#800000"/><rect x="1213" y="302" width="18" height="1" fill="#800000"/><rect x="1237" y="302" width="18" height="1" fill="#800000"/><rect x="1261" y="302" width="18" height="1" fill="#800000"/><rect x="1285" y="302" width="18" height="1" fill="#800000"/><rect x="1309" y="302" width="17" height="1" fill="#800000"/>
<path d="M12.5 488.9 C15.5 486.8 24.8 480.4 30.5 476.6 C36.2 472.8 40.8 469.7 46.9 466.3 C53.0 462.9 59.9 457.0 67.4 456.5 C74.9 456.0 84.5 461.7 92.0 463.2 C99.5 464.7 107.0 464.4 112.5 465.3 C118.0 466.2 118.0 467.4 124.8 468.4 C131.6 469.4 145.2 471.2 153.4 471.4 C161.6 471.6 167.2 471.6 174.0 469.4 C180.8 467.2 187.6 461.2 194.4 458.0 C201.2 454.8 208.1 453.6 214.9 449.9 C221.7 446.2 229.6 439.0 235.4 435.6 C241.2 432.2 245.5 431.2 250.0 429.7 C254.5 428.2 257.9 427.0 262.3 426.6 C266.7 426.2 270.1 426.4 276.6 427.2 C283.1 428.0 293.7 430.2 301.2 431.7 C308.7 433.2 314.9 434.1 321.7 436.2 C328.5 438.2 336.4 441.9 342.2 444.0 C348.0 446.1 352.2 448.2 356.6 448.5 C361.1 448.8 364.5 447.9 368.9 446.0 C373.3 444.1 378.4 440.9 383.2 436.8 C388.0 432.7 392.4 429.2 397.5 421.5 C402.6 413.8 407.9 400.9 414.0 390.7 C420.1 380.4 428.0 369.3 434.3 360.0 C440.6 350.7 446.1 344.5 451.7 334.8 C457.3 325.1 462.6 312.1 468.1 302.0 C473.6 291.9 479.0 282.3 484.5 274.3 C490.0 266.3 494.6 259.7 500.9 253.8 C507.1 247.9 514.4 243.8 522.0 238.9 C529.6 234.0 539.8 229.7 546.6 224.5 C553.4 219.3 557.2 211.8 563.0 208.0 C568.8 204.2 575.3 202.4 581.4 201.6 C587.5 200.8 593.3 201.9 599.8 203.0 C606.3 204.1 613.5 205.2 620.3 208.1 C627.1 211.0 635.3 216.8 640.8 220.4 C646.3 224.1 648.1 226.3 653.3 230.0 C658.4 233.7 664.5 238.5 671.7 242.3 C678.9 246.1 688.8 250.6 696.3 253.0 C703.8 255.4 708.9 254.6 716.8 257.0 C724.6 259.4 735.9 264.6 743.4 267.3 C750.9 270.0 756.4 270.3 761.9 273.0 C767.4 275.7 770.4 279.9 776.2 283.3 C782.0 286.7 789.9 290.1 796.7 293.5 C803.5 296.9 811.4 300.7 817.2 303.8 C823.0 306.9 826.1 308.5 831.6 312.0 C837.1 315.5 843.9 321.5 850.5 325.0 C857.1 328.5 864.2 331.3 871.0 333.2 C877.8 335.1 884.7 336.6 891.5 336.3 C898.3 336.0 906.2 332.4 912.0 331.1 C917.8 329.8 921.5 330.9 926.3 328.7 C931.1 326.5 935.6 321.5 940.7 317.8 C945.8 314.1 951.5 309.5 957.0 306.6 C962.5 303.7 968.6 301.8 973.4 300.4 C978.2 299.0 981.3 298.7 985.7 298.4 C990.1 298.1 995.2 297.7 1000.0 298.4 C1004.8 299.1 1008.6 299.4 1014.4 302.5 C1020.2 305.6 1028.7 310.1 1035.0 316.8 C1041.3 323.5 1049.6 338.2 1052.5 342.5" fill="none" stroke="#32CD32" stroke-width="1.1"/>
<g shape-rendering="crispEdges"><rect x="19" y="451" width="5" height="20" fill="#0000CC"/><rect x="27" y="439" width="5" height="12" fill="#0000CC"/><rect x="43" y="457" width="5" height="8" fill="#0000CC"/><rect x="51" y="450" width="5" height="7" fill="#0000CC"/><rect x="59" y="441" width="5" height="13" fill="#0000CC"/><rect x="83" y="470" width="5" height="22" fill="#0000CC"/><rect x="107" y="481" width="5" height="4" fill="#0000CC"/><rect x="123" y="475" width="5" height="6" fill="#0000CC"/><rect x="131" y="473" width="5" height="5" fill="#0000CC"/><rect x="155" y="422" width="5" height="56" fill="#0000CC"/><rect x="171" y="432" width="5" height="8" fill="#0000CC"/><rect x="179" y="427" width="5" height="5" fill="#0000CC"/><rect x="187" y="427" width="5" height="3" fill="#0000CC"/><rect x="195" y="427" width="5" height="4" fill="#0000CC"/><rect x="211" y="417" width="5" height="9" fill="#0000CC"/><rect x="219" y="406" width="5" height="13" fill="#0000CC"/><rect x="227" y="401" width="5" height="4" fill="#0000CC"/><rect x="259" y="438" width="5" height="5" fill="#0000CC"/><rect x="275" y="438" width="5" height="6" fill="#0000CC"/><rect x="291" y="452" width="5" height="2" fill="#0000CC"/><rect x="299" y="448" width="5" height="5" fill="#0000CC"/><rect x="315" y="448" width="5" height="3" fill="#0000CC"/><rect x="331" y="446" width="5" height="6" fill="#0000CC"/><rect x="339" y="445" width="5" height="4" fill="#0000CC"/><rect x="355" y="454" width="5" height="20" fill="#0000CC"/><rect x="363" y="417" width="5" height="37" fill="#0000CC"/><rect x="371" y="408" width="5" height="9" fill="#0000CC"/><rect x="379" y="361" width="5" height="47" fill="#0000CC"/><rect x="387" y="330" width="5" height="31" fill="#0000CC"/><rect x="395" y="291" width="5" height="41" fill="#0000CC"/><rect x="403" y="260" width="5" height="31" fill="#0000CC"/><rect x="411" y="248" width="5" height="15" fill="#0000CC"/><rect x="427" y="265" width="5" height="19" fill="#0000CC"/><rect x="451" y="270" width="5" height="13" fill="#0000CC"/><rect x="459" y="263" width="5" height="6" fill="#0000CC"/><rect x="467" y="247" width="5" height="19" fill="#0000CC"/><rect x="475" y="228" width="5" height="21" fill="#0000CC"/><rect x="491" y="224" width="5" height="9" fill="#0000CC"/><rect x="499" y="201" width="5" height="25" fill="#0000CC"/><rect x="515" y="165" width="5" height="39" fill="#0000CC"/><rect x="539" y="184" width="5" height="8" fill="#0000CC"/><rect x="547" y="150" width="5" height="34" fill="#0000CC"/><rect x="571" y="197" width="5" height="23" fill="#0000CC"/><rect x="595" y="235" width="5" height="16" fill="#0000CC"/><rect x="611" y="236" width="5" height="15" fill="#0000CC"/><rect x="643" y="252" width="5" height="17" fill="#0000CC"/><rect x="659" y="233" width="5" height="22" fill="#0000CC"/><rect x="699" y="273" width="5" height="8" fill="#0000CC"/><rect x="707" y="265" width="5" height="8" fill="#0000CC"/><rect x="763" y="301" width="5" height="1" fill="#0000CC"/><rect x="787" y="324" width="5" height="6" fill="#0000CC"/><rect x="803" y="330" width="5" height="1" fill="#0000CC"/><rect x="811" y="328" width="5" height="4" fill="#0000CC"/><rect x="827" y="334" width="5" height="7" fill="#0000CC"/><rect x="859" y="347" width="5" height="5" fill="#0000CC"/><rect x="867" y="335" width="5" height="7" fill="#0000CC"/><rect x="883" y="333" width="5" height="8" fill="#0000CC"/><rect x="891" y="323" width="5" height="12" fill="#0000CC"/><rect x="899" y="308" width="5" height="18" fill="#0000CC"/><rect x="907" y="303" width="5" height="4" fill="#0000CC"/><rect x="915" y="297" width="5" height="5" fill="#0000CC"/><rect x="931" y="273" width="5" height="55" fill="#0000CC"/><rect x="939" y="231" width="5" height="45" fill="#0000CC"/><rect x="979" y="297" width="5" height="35" fill="#0000CC"/></g>
<rect x="13" y="437" width="18" height="1" fill="#800000"/><rect x="37" y="437" width="18" height="1" fill="#800000"/><rect x="61" y="437" width="18" height="1" fill="#800000"/><rect x="85" y="437" width="18" height="1" fill="#800000"/><rect x="109" y="437" width="18" height="1" fill="#800000"/><rect x="133" y="437" width="18" height="1" fill="#800000"/><rect x="157" y="437" width="18" height="1" fill="#800000"/><rect x="181" y="437" width="18" height="1" fill="#800000"/><rect x="205" y="437" width="18" height="1" fill="#800000"/><rect x="229" y="437" width="18" height="1" fill="#800000"/><rect x="253" y="437" width="18" height="1" fill="#800000"/><rect x="277" y="437" width="18" height="1" fill="#800000"/><rect x="301" y="437" width="18" height="1" fill="#800000"/><rect x="325" y="437" width="18" height="1" fill="#800000"/><rect x="349" y="437" width="18" height="1" fill="#800000"/><rect x="373" y="437" width="18" height="1" fill="#800000"/><rect x="397" y="437" width="18" height="1" fill="#800000"/><rect x="421" y="437" width="18" height="1" fill="#800000"/><rect x="445" y="437" width="18" height="1" fill="#800000"/><rect x="469" y="437" width="18" height="1" fill="#800000"/><rect x="493" y="437" width="18" height="1" fill="#800000"/><rect x="517" y="437" width="18" height="1" fill="#800000"/><rect x="541" y="437" width="18" height="1" fill="#800000"/><rect x="565" y="437" width="18" height="1" fill="#800000"/><rect x="589" y="437" width="18" height="1" fill="#800000"/><rect x="613" y="437" width="18" height="1" fill="#800000"/><rect x="637" y="437" width="18" height="1" fill="#800000"/><rect x="661" y="437" width="18" height="1" fill="#800000"/><rect x="685" y="437" width="18" height="1" fill="#800000"/><rect x="709" y="437" width="18" height="1" fill="#800000"/><rect x="733" y="437" width="18" height="1" fill="#800000"/><rect x="757" y="437" width="18" height="1" fill="#800000"/><rect x="781" y="437" width="18" height="1" fill="#800000"/><rect x="805" y="437" width="18" height="1" fill="#800000"/><rect x="829" y="437" width="18" height="1" fill="#800000"/><rect x="853" y="437" width="18" height="1" fill="#800000"/><rect x="877" y="437" width="18" height="1" fill="#800000"/><rect x="901" y="437" width="18" height="1" fill="#800000"/><rect x="925" y="437" width="18" height="1" fill="#800000"/><rect x="949" y="437" width="18" height="1" fill="#800000"/><rect x="973" y="437" width="18" height="1" fill="#800000"/><rect x="997" y="437" width="18" height="1" fill="#800000"/><rect x="1021" y="437" width="18" height="1" fill="#800000"/><rect x="1045" y="437" width="18" height="1" fill="#800000"/><rect x="1069" y="437" width="18" height="1" fill="#800000"/><rect x="1093" y="437" width="18" height="1" fill="#800000"/><rect x="1117" y="437" width="18" height="1" fill="#800000"/><rect x="1141" y="437" width="18" height="1" fill="#800000"/><rect x="1165" y="437" width="18" height="1" fill="#800000"/><rect x="1189" y="437" width="18" height="1" fill="#800000"/><rect x="1213" y="437" width="18" height="1" fill="#800000"/><rect x="1237" y="437" width="18" height="1" fill="#800000"/><rect x="1261" y="437" width="18" height="1" fill="#800000"/><rect x="1285" y="437" width="18" height="1" fill="#800000"/><rect x="1309" y="437" width="17" height="1" fill="#800000"/>
<ellipse cx="948" cy="251" rx="29.5" ry="35.5" fill="none" stroke="#C0C0C0" stroke-width="2.2"/>
<rect x="1327" y="137" width="4" height="1" fill="#000"/>
<text x="1332.70" y="141.5" font-size="10" fill="#000" textLength="31.04" lengthAdjust="spacingAndGlyphs" stroke="#000" stroke-width="0.25">1.16755</text>
<rect x="1327" y="174" width="4" height="1" fill="#000"/>
<text x="1332.70" y="178.5" font-size="10" fill="#000" textLength="31.04" lengthAdjust="spacingAndGlyphs" stroke="#000" stroke-width="0.25">1.16720</text>
<rect x="1327" y="210" width="4" height="1" fill="#000"/>
<text x="1332.70" y="214.5" font-size="10" fill="#000" textLength="31.04" lengthAdjust="spacingAndGlyphs" stroke="#000" stroke-width="0.25">1.16685</text>
<rect x="1327" y="247" width="4" height="1" fill="#000"/>
<text x="1332.70" y="251.5" font-size="10" fill="#000" textLength="31.04" lengthAdjust="spacingAndGlyphs" stroke="#000" stroke-width="0.25">1.16650</text>
<rect x="1327" y="284" width="4" height="1" fill="#000"/>
<text x="1332.70" y="288.5" font-size="10" fill="#000" textLength="31.04" lengthAdjust="spacingAndGlyphs" stroke="#000" stroke-width="0.25">1.16615</text>
<rect x="1327" y="321" width="4" height="1" fill="#000"/>
<text x="1332.70" y="325.5" font-size="10" fill="#000" textLength="31.04" lengthAdjust="spacingAndGlyphs" stroke="#000" stroke-width="0.25">1.16580</text>
<rect x="1327" y="357" width="4" height="1" fill="#000"/>
<text x="1332.70" y="361.5" font-size="10" fill="#000" textLength="31.04" lengthAdjust="spacingAndGlyphs" stroke="#000" stroke-width="0.25">1.16545</text>
<rect x="1327" y="394" width="4" height="1" fill="#000"/>
<text x="1332.70" y="398.5" font-size="10" fill="#000" textLength="31.04" lengthAdjust="spacingAndGlyphs" stroke="#000" stroke-width="0.25">1.16510</text>
<rect x="1327" y="431" width="4" height="1" fill="#000"/>
<text x="1332.70" y="435.5" font-size="10" fill="#000" textLength="31.04" lengthAdjust="spacingAndGlyphs" stroke="#000" stroke-width="0.25">1.16475</text>
<rect x="1327" y="467" width="4" height="1" fill="#000"/>
<text x="1332.70" y="471.5" font-size="10" fill="#000" textLength="31.04" lengthAdjust="spacingAndGlyphs" stroke="#000" stroke-width="0.25">1.16440</text>
<rect x="1327" y="504" width="4" height="1" fill="#000"/>
<text x="1332.70" y="508.5" font-size="10" fill="#000" textLength="31.04" lengthAdjust="spacingAndGlyphs" stroke="#000" stroke-width="0.25">1.16405</text>
<rect x="1328" y="296" width="37" height="11" fill="#800000"/>
<text x="1332.70" y="305" font-size="10" fill="#FFFFFF" textLength="31.04" lengthAdjust="spacingAndGlyphs" stroke="#FFFFFF" stroke-width="0.2">1.16597</text>
<rect x="1328" y="431" width="37" height="11" fill="#800000"/>
<text x="1332.70" y="440" font-size="10" fill="#FFFFFF" textLength="31.04" lengthAdjust="spacingAndGlyphs" stroke="#FFFFFF" stroke-width="0.2">1.16469</text>
<rect x="13" y="511" width="1" height="4" fill="#000"/>
<text x="12.50" y="523" font-size="10" fill="#000" textLength="49.98" lengthAdjust="spacingAndGlyphs" stroke="#000" stroke-width="0.25">15 Oct 2025</text>
<rect x="77" y="511" width="1" height="4" fill="#000"/>
<text x="76.50" y="523" font-size="10" fill="#000" textLength="53.46" lengthAdjust="spacingAndGlyphs" stroke="#000" stroke-width="0.25">15 Oct 22:10</text>
<rect x="141" y="511" width="1" height="4" fill="#000"/>
<text x="140.50" y="523" font-size="10" fill="#000" textLength="53.46" lengthAdjust="spacingAndGlyphs" stroke="#000" stroke-width="0.25">15 Oct 22:50</text>
<rect x="205" y="511" width="1" height="4" fill="#000"/>
<text x="204.50" y="523" font-size="10" fill="#000" textLength="53.46" lengthAdjust="spacingAndGlyphs" stroke="#000" stroke-width="0.25">15 Oct 23:30</text>
<rect x="269" y="511" width="1" height="4" fill="#000"/>
<text x="268.50" y="523" font-size="10" fill="#000" textLength="53.46" lengthAdjust="spacingAndGlyphs" stroke="#000" stroke-width="0.25">16 Oct 00:10</text>
<rect x="333" y="511" width="1" height="4" fill="#000"/>
<text x="332.50" y="523" font-size="10" fill="#000" textLength="53.46" lengthAdjust="spacingAndGlyphs" stroke="#000" stroke-width="0.25">16 Oct 00:50</text>
<rect x="397" y="511" width="1" height="4" fill="#000"/>
<text x="396.50" y="523" font-size="10" fill="#000" textLength="53.46" lengthAdjust="spacingAndGlyphs" stroke="#000" stroke-width="0.25">16 Oct 01:30</text>
<rect x="461" y="511" width="1" height="4" fill="#000"/>
<text x="460.50" y="523" font-size="10" fill="#000" textLength="53.46" lengthAdjust="spacingAndGlyphs" stroke="#000" stroke-width="0.25">16 Oct 02:10</text>
<rect x="525" y="511" width="1" height="4" fill="#000"/>
<text x="524.50" y="523" font-size="10" fill="#000" textLength="53.46" lengthAdjust="spacingAndGlyphs" stroke="#000" stroke-width="0.25">16 Oct 02:50</text>
<rect x="589" y="511" width="1" height="4" fill="#000"/>
<text x="588.50" y="523" font-size="10" fill="#000" textLength="53.46" lengthAdjust="spacingAndGlyphs" stroke="#000" stroke-width="0.25">16 Oct 03:30</text>
<rect x="653" y="511" width="1" height="4" fill="#000"/>
<text x="652.50" y="523" font-size="10" fill="#000" textLength="53.46" lengthAdjust="spacingAndGlyphs" stroke="#000" stroke-width="0.25">16 Oct 04:10</text>
<rect x="717" y="511" width="1" height="4" fill="#000"/>
<text x="716.50" y="523" font-size="10" fill="#000" textLength="53.46" lengthAdjust="spacingAndGlyphs" stroke="#000" stroke-width="0.25">16 Oct 04:50</text>
<rect x="781" y="511" width="1" height="4" fill="#000"/>
<text x="780.50" y="523" font-size="10" fill="#000" textLength="53.46" lengthAdjust="spacingAndGlyphs" stroke="#000" stroke-width="0.25">16 Oct 05:30</text>
<rect x="845" y="511" width="1" height="4" fill="#000"/>
<text x="844.50" y="523" font-size="10" fill="#000" textLength="53.46" lengthAdjust="spacingAndGlyphs" stroke="#000" stroke-width="0.25">16 Oct 06:10</text>
<rect x="909" y="511" width="1" height="4" fill="#000"/>
<text x="908.50" y="523" font-size="10" fill="#000" textLength="53.46" lengthAdjust="spacingAndGlyphs" stroke="#000" stroke-width="0.25">16 Oct 06:50</text>
<rect x="973" y="511" width="1" height="4" fill="#000"/>
<text x="972.50" y="523" font-size="10" fill="#000" textLength="53.46" lengthAdjust="spacingAndGlyphs" stroke="#000" stroke-width="0.25">16 Oct 07:30</text>
<rect x="1037" y="511" width="1" height="4" fill="#000"/>
<text x="1036.50" y="523" font-size="10" fill="#000" textLength="53.46" lengthAdjust="spacingAndGlyphs" stroke="#000" stroke-width="0.25">16 Oct 08:10</text>
<path d="M16 120 l3.5 -4 l3.5 4 z" fill="#000"/>
<text x="28.20" y="121.1" font-size="10" fill="#000" textLength="54.60" lengthAdjust="spacingAndGlyphs" stroke="#000" stroke-width="0.25">EURUSD,M5</text>
<text x="89.20" y="121.1" font-size="10" fill="#000" textLength="32.04" lengthAdjust="spacingAndGlyphs" stroke="#000" stroke-width="0.25">1.16496</text>
<text x="125.40" y="121.1" font-size="10" fill="#000" textLength="32.04" lengthAdjust="spacingAndGlyphs" stroke="#000" stroke-width="0.25">1.16503</text>
<text x="161.30" y="121.1" font-size="10" fill="#000" textLength="32.04" lengthAdjust="spacingAndGlyphs" stroke="#000" stroke-width="0.25">1.16468</text>
<text x="197.40" y="121.1" font-size="10" fill="#000" textLength="32.54" lengthAdjust="spacingAndGlyphs" stroke="#000" stroke-width="0.25">1.16470</text>
<defs><linearGradient id="rtop" x1="0" y1="0" x2="0" y2="1"><stop offset="0" stop-color="#FF5A5A"/><stop offset="1" stop-color="#E02828"/></linearGradient><linearGradient id="rbig" x1="0" y1="0" x2="0" y2="1"><stop offset="0" stop-color="#E02A2A"/><stop offset="1" stop-color="#A80000"/></linearGradient></defs>
<rect x="16" y="127" width="46" height="22" fill="url(#rtop)"/>
<rect x="164" y="127" width="45" height="22" fill="url(#rtop)"/>
<rect x="16" y="148" width="96" height="35" fill="url(#rbig)"/>
<rect x="114" y="148" width="95" height="35" fill="url(#rbig)"/>
<rect x="20" y="148" width="38" height="1" fill="#FF8080"/>
<rect x="167" y="148" width="38" height="1" fill="#FF8080"/>
<rect x="62" y="127" width="102" height="21" fill="#F5FFFA"/>
<rect x="64.5" y="127.5" width="96" height="19" fill="#FFFFFF" stroke="#B8B8B8"/>
<rect x="65" y="128" width="18" height="18" fill="#E6E6E6"/><rect x="142" y="128" width="18" height="18" fill="#E6E6E6"/>
<rect x="83" y="128" width="1" height="18" fill="#B8B8B8"/><rect x="141" y="128" width="1" height="18" fill="#B8B8B8"/>
<path d="M71.5 136 h5 l-2.5 3 z" fill="#000"/><path d="M148.5 139 h5 l-2.5 -3 z" fill="#000"/>
<text x="116.00" y="141" font-size="12" fill="#000" textLength="20.66" lengthAdjust="spacingAndGlyphs">0.02</text>
<text x="26.00" y="141.7" font-size="12" fill="#FFFFFF" textLength="23.56" lengthAdjust="spacingAndGlyphs">SELL</text>
<text x="174.30" y="141.7" font-size="12" fill="#FFFFFF" textLength="20.98" lengthAdjust="spacingAndGlyphs">BUY</text>
<text x="31.00" y="176.7" font-size="13" font-weight="bold" fill="#FFFFFF" textLength="23.00" lengthAdjust="spacingAndGlyphs">1.16</text>
<text x="58.00" y="176.7" font-size="30" fill="#FFFFFF" textLength="31.97" lengthAdjust="spacingAndGlyphs">46</text>
<text x="95.00" y="161.6" font-size="11" font-weight="bold" fill="#FFFFFF" textLength="6.82" lengthAdjust="spacingAndGlyphs">6</text>
<text x="128.80" y="176.7" font-size="13" font-weight="bold" fill="#FFFFFF" textLength="22.70" lengthAdjust="spacingAndGlyphs">1.16</text>
<text x="154.90" y="176.7" font-size="30" fill="#FFFFFF" textLength="31.07" lengthAdjust="spacingAndGlyphs">47</text>
<text x="192.00" y="161.6" font-size="11" font-weight="bold" fill="#FFFFFF" textLength="6.42" lengthAdjust="spacingAndGlyphs">5</text>
<rect x="8" y="531" width="1357" height="152" fill="#F0F0F0"/>
<rect x="8" y="535" width="1357" height="1" fill="#A0A0A0"/>
<path d="M12 539 l5 5 M17 539 l-5 5" stroke="#000" stroke-width="1.6"/>
<defs><linearGradient id="tab" x1="0" y1="0" x2="0" y2="1"><stop offset="0" stop-color="#B6CDE6"/><stop offset="1" stop-color="#A7C1DE"/></linearGradient></defs>
<rect x="9" y="550" width="13" height="133" fill="url(#tab)"/><rect x="22" y="550" width="1" height="133" fill="#A0A0A0"/>
<text x="0" y="0" font-size="11" fill="#000" text-anchor="end" transform="translate(20.5 665.3) rotate(-90)">Terminal</text>
<rect x="23" y="536" width="1330" height="25" fill="#FFFFFF"/>
<rect x="23" y="536" width="1" height="147" fill="#A0A0A0"/>
<rect x="141" y="537" width="1" height="23" fill="#E5E5E5"/>
<rect x="341" y="537" width="1" height="23" fill="#E5E5E5"/>
<rect x="432" y="537" width="1" height="23" fill="#E5E5E5"/>
<rect x="504" y="537" width="1" height="23" fill="#E5E5E5"/>
<rect x="595" y="537" width="1" height="23" fill="#E5E5E5"/>
<rect x="686" y="537" width="1" height="23" fill="#E5E5E5"/>
<rect x="777" y="537" width="1" height="23" fill="#E5E5E5"/>
<rect x="868" y="537" width="1" height="23" fill="#E5E5E5"/>
<rect x="1068" y="537" width="1" height="23" fill="#E5E5E5"/>
<rect x="1159" y="537" width="1" height="23" fill="#E5E5E5"/>
<rect x="1250" y="537" width="1" height="23" fill="#E5E5E5"/>
<text x="30.30" y="553" font-size="12" fill="#000" textLength="29.68" lengthAdjust="spacingAndGlyphs">Order</text>
<text x="310.80" y="553" font-size="12" fill="#000" textLength="24.72" lengthAdjust="spacingAndGlyphs">Time</text>
<text x="403.80" y="553" font-size="12" fill="#000" textLength="23.01" lengthAdjust="spacingAndGlyphs">Type</text>
<text x="479.50" y="553" font-size="12" fill="#000" textLength="19.34" lengthAdjust="spacingAndGlyphs">Size</text>
<text x="550.30" y="553" font-size="12" fill="#000" textLength="38.91" lengthAdjust="spacingAndGlyphs">Symbol</text>
<text x="655.50" y="553" font-size="12" fill="#000" textLength="25.34" lengthAdjust="spacingAndGlyphs">Price</text>
<text x="749.20" y="553" font-size="12" fill="#000" textLength="22.18" lengthAdjust="spacingAndGlyphs">S / L</text>
<text x="839.80" y="553" font-size="12" fill="#000" textLength="22.22" lengthAdjust="spacingAndGlyphs">T / P</text>
<text x="1038.60" y="553" font-size="12" fill="#000" textLength="24.32" lengthAdjust="spacingAndGlyphs">Time</text>
<text x="1128.60" y="553" font-size="12" fill="#000" textLength="25.34" lengthAdjust="spacingAndGlyphs">Price</text>
<text x="1217.20" y="553" font-size="12" fill="#000" textLength="27.72" lengthAdjust="spacingAndGlyphs">Swap</text>
<text x="1318.70" y="553" font-size="12" fill="#000" textLength="28.21" lengthAdjust="spacingAndGlyphs">Profit</text>
<path d="M73 553 l2 -5" stroke="#888" stroke-width="0.8"/>
<rect x="24" y="561" width="1329" height="20" fill="#EBEBEB"/>
<rect x="24" y="561" width="1329" height="1" fill="#D0D0D0"/>
<rect x="140" y="561" width="1" height="20" fill="#D0D0D0"/>
<rect x="340" y="561" width="1" height="20" fill="#D0D0D0"/>
<rect x="431" y="561" width="1" height="20" fill="#D0D0D0"/>
<rect x="503" y="561" width="1" height="20" fill="#D0D0D0"/>
<rect x="594" y="561" width="1" height="20" fill="#D0D0D0"/>
<rect x="685" y="561" width="1" height="20" fill="#D0D0D0"/>
<rect x="776" y="561" width="1" height="20" fill="#D0D0D0"/>
<rect x="867" y="561" width="1" height="20" fill="#D0D0D0"/>
<rect x="1067" y="561" width="1" height="20" fill="#D0D0D0"/>
<rect x="1158" y="561" width="1" height="20" fill="#D0D0D0"/>
<rect x="1249" y="561" width="1" height="20" fill="#D0D0D0"/>
<path d="M28 564.6 h7.5 l3 3 v9.7 q0 1 -1 1 h-9.5 q-1 0 -1 -1 v-11.7 q0 -1 1 -1 z" fill="#F8F8F8" stroke="#555" stroke-width="1"/><circle cx="37.4" cy="575.1" r="3.3" fill="#E84A12" stroke="#A83008" stroke-width="0.7"/><circle cx="36.6" cy="574.2" r="1" fill="#FF9A70"/>
<text x="46.20" y="575" font-size="12" fill="#000" textLength="48.05" lengthAdjust="spacingAndGlyphs">35073620</text>
<text x="238.21" y="575" font-size="12" fill="#000" textLength="99.09" lengthAdjust="spacingAndGlyphs">2025.10.16 07:05:02</text>
<text x="412.10" y="575" font-size="12" fill="#000" textLength="16.20" lengthAdjust="spacingAndGlyphs">sell</text>
<text x="479.24" y="575" font-size="12" fill="#000" textLength="21.02" lengthAdjust="spacingAndGlyphs">0.02</text>
<text x="558.27" y="575" font-size="12" fill="#000" textLength="33.02" lengthAdjust="spacingAndGlyphs">eurusd</text>
<text x="643.24" y="575" font-size="12" fill="#000" textLength="39.04" lengthAdjust="spacingAndGlyphs">1.16567</text>
<text x="734.24" y="575" font-size="12" fill="#000" textLength="39.04" lengthAdjust="spacingAndGlyphs">1.16614</text>
<text x="825.24" y="575" font-size="12" fill="#000" textLength="39.04" lengthAdjust="spacingAndGlyphs">0.00000</text>
<text x="965.21" y="575" font-size="12" fill="#000" textLength="99.09" lengthAdjust="spacingAndGlyphs">2025.10.16 07:08:06</text>
<text x="1117.05" y="575" font-size="12" fill="#000" textLength="38.24" lengthAdjust="spacingAndGlyphs">1.16611</text>
<text x="1225.24" y="575" font-size="12" fill="#000" textLength="21.02" lengthAdjust="spacingAndGlyphs">0.00</text>
<text x="1324.64" y="575" font-size="12" fill="#000" textLength="24.62" lengthAdjust="spacingAndGlyphs">-0.88</text>
<rect x="24" y="581" width="1329" height="20" fill="#FFFFFF"/>
<rect x="24" y="581" width="1329" height="1" fill="#D0D0D0"/>
<rect x="140" y="581" width="1" height="20" fill="#D0D0D0"/>
<rect x="340" y="581" width="1" height="20" fill="#D0D0D0"/>
<rect x="431" y="581" width="1" height="20" fill="#D0D0D0"/>
<rect x="503" y="581" width="1" height="20" fill="#D0D0D0"/>
<rect x="594" y="581" width="1" height="20" fill="#D0D0D0"/>
<rect x="685" y="581" width="1" height="20" fill="#D0D0D0"/>
<rect x="776" y="581" width="1" height="20" fill="#D0D0D0"/>
<rect x="867" y="581" width="1" height="20" fill="#D0D0D0"/>
<rect x="1067" y="581" width="1" height="20" fill="#D0D0D0"/>
<rect x="1158" y="581" width="1" height="20" fill="#D0D0D0"/>
<rect x="1249" y="581" width="1" height="20" fill="#D0D0D0"/>
<path d="M28 584.6 h7.5 l3 3 v9.7 q0 1 -1 1 h-9.5 q-1 0 -1 -1 v-11.7 q0 -1 1 -1 z" fill="#F8F8F8" stroke="#555" stroke-width="1"/><circle cx="37.4" cy="595.1" r="3.3" fill="#E84A12" stroke="#A83008" stroke-width="0.7"/><circle cx="36.6" cy="594.2" r="1" fill="#FF9A70"/>
<text x="46.20" y="595" font-size="12" fill="#000" textLength="48.05" lengthAdjust="spacingAndGlyphs">35074052</text>
<text x="238.21" y="595" font-size="12" fill="#000" textLength="99.09" lengthAdjust="spacingAndGlyphs">2025.10.16 07:24:43</text>
<text x="412.10" y="595" font-size="12" fill="#000" textLength="16.20" lengthAdjust="spacingAndGlyphs">sell</text>
<text x="479.24" y="595" font-size="12" fill="#000" textLength="21.02" lengthAdjust="spacingAndGlyphs">0.02</text>
<text x="558.27" y="595" font-size="12" fill="#000" textLength="33.02" lengthAdjust="spacingAndGlyphs">eurusd</text>
<text x="643.24" y="595" font-size="12" fill="#000" textLength="39.04" lengthAdjust="spacingAndGlyphs">1.16635</text>
<text x="734.24" y="595" font-size="12" fill="#000" textLength="39.04" lengthAdjust="spacingAndGlyphs">1.16595</text>
<text x="825.24" y="595" font-size="12" fill="#000" textLength="39.04" lengthAdjust="spacingAndGlyphs">0.00000</text>
<text x="965.21" y="595" font-size="12" fill="#000" textLength="99.09" lengthAdjust="spacingAndGlyphs">2025.10.16 08:23:37</text>
<text x="1116.24" y="595" font-size="12" fill="#000" textLength="39.04" lengthAdjust="spacingAndGlyphs">1.16497</text>
<text x="1225.24" y="595" font-size="12" fill="#000" textLength="21.02" lengthAdjust="spacingAndGlyphs">0.00</text>
<text x="1328.24" y="595" font-size="12" fill="#000" textLength="21.02" lengthAdjust="spacingAndGlyphs">2.76</text>
<rect x="24" y="601" width="1329" height="20" fill="#EBEBEB"/>
<rect x="24" y="601" width="1329" height="1" fill="#D0D0D0"/>
<rect x="140" y="601" width="1" height="20" fill="#D0D0D0"/>
<rect x="340" y="601" width="1" height="20" fill="#D0D0D0"/>
<rect x="431" y="601" width="1" height="20" fill="#D0D0D0"/>
<rect x="503" y="601" width="1" height="20" fill="#D0D0D0"/>
<rect x="594" y="601" width="1" height="20" fill="#D0D0D0"/>
<rect x="685" y="601" width="1" height="20" fill="#D0D0D0"/>
<rect x="776" y="601" width="1" height="20" fill="#D0D0D0"/>
<rect x="867" y="601" width="1" height="20" fill="#D0D0D0"/>
<rect x="1067" y="601" width="1" height="20" fill="#D0D0D0"/>
<rect x="1158" y="601" width="1" height="20" fill="#D0D0D0"/>
<rect x="1249" y="601" width="1" height="20" fill="#D0D0D0"/>
<path d="M28 604.6 h7.5 l3 3 v9.7 q0 1 -1 1 h-9.5 q-1 0 -1 -1 v-11.7 q0 -1 1 -1 z" fill="#F8F8F8" stroke="#555" stroke-width="1"/><circle cx="37.4" cy="615.1" r="3.3" fill="#E84A12" stroke="#A83008" stroke-width="0.7"/><circle cx="36.6" cy="614.2" r="1" fill="#FF9A70"/>
<text x="46.20" y="615" font-size="12" fill="#000" textLength="48.05" lengthAdjust="spacingAndGlyphs">35074054</text>
<text x="238.21" y="615" font-size="12" fill="#000" textLength="99.09" lengthAdjust="spacingAndGlyphs">2025.10.16 07:24:50</text>
<text x="412.10" y="615" font-size="12" fill="#000" textLength="16.20" lengthAdjust="spacingAndGlyphs">sell</text>
<text x="479.24" y="615" font-size="12" fill="#000" textLength="21.02" lengthAdjust="spacingAndGlyphs">0.02</text>
<text x="558.27" y="615" font-size="12" fill="#000" textLength="33.02" lengthAdjust="spacingAndGlyphs">eurusd</text>
<text x="643.24" y="615" font-size="12" fill="#000" textLength="39.04" lengthAdjust="spacingAndGlyphs">1.16629</text>
<text x="734.24" y="615" font-size="12" fill="#000" textLength="39.04" lengthAdjust="spacingAndGlyphs">1.16631</text>
<text x="825.24" y="615" font-size="12" fill="#000" textLength="39.04" lengthAdjust="spacingAndGlyphs">0.00000</text>
<text x="965.21" y="615" font-size="12" fill="#000" textLength="99.09" lengthAdjust="spacingAndGlyphs">2025.10.16 08:23:39</text>
<text x="1116.24" y="615" font-size="12" fill="#000" textLength="39.04" lengthAdjust="spacingAndGlyphs">1.16497</text>
<text x="1225.24" y="615" font-size="12" fill="#000" textLength="21.02" lengthAdjust="spacingAndGlyphs">0.00</text>
<text x="1328.24" y="615" font-size="12" fill="#000" textLength="21.02" lengthAdjust="spacingAndGlyphs">2.64</text>
<rect x="24" y="621" width="1329" height="20" fill="#FFFFFF"/>
<rect x="24" y="621" width="1329" height="1" fill="#D0D0D0"/>
<rect x="140" y="621" width="1" height="20" fill="#D0D0D0"/>
<rect x="340" y="621" width="1" height="20" fill="#D0D0D0"/>
<rect x="431" y="621" width="1" height="20" fill="#D0D0D0"/>
<rect x="503" y="621" width="1" height="20" fill="#D0D0D0"/>
<rect x="594" y="621" width="1" height="20" fill="#D0D0D0"/>
<rect x="685" y="621" width="1" height="20" fill="#D0D0D0"/>
<rect x="776" y="621" width="1" height="20" fill="#D0D0D0"/>
<rect x="867" y="621" width="1" height="20" fill="#D0D0D0"/>
<rect x="1067" y="621" width="1" height="20" fill="#D0D0D0"/>
<rect x="1158" y="621" width="1" height="20" fill="#D0D0D0"/>
<rect x="1249" y="621" width="1" height="20" fill="#D0D0D0"/>
<path d="M28 624.6 h7.5 l3 3 v9.7 q0 1 -1 1 h-9.5 q-1 0 -1 -1 v-11.7 q0 -1 1 -1 z" fill="#F8F8F8" stroke="#555" stroke-width="1"/><circle cx="37.4" cy="635.1" r="3.3" fill="#E84A12" stroke="#A83008" stroke-width="0.7"/><circle cx="36.6" cy="634.2" r="1" fill="#FF9A70"/>
<text x="46.20" y="635" font-size="12" fill="#000" textLength="47.25" lengthAdjust="spacingAndGlyphs">35074211</text>
<text x="238.21" y="635" font-size="12" fill="#000" textLength="99.09" lengthAdjust="spacingAndGlyphs">2025.10.16 07:42:03</text>
<text x="412.10" y="635" font-size="12" fill="#000" textLength="16.20" lengthAdjust="spacingAndGlyphs">sell</text>
<text x="479.24" y="635" font-size="12" fill="#000" textLength="21.02" lengthAdjust="spacingAndGlyphs">0.02</text>
<text x="558.27" y="635" font-size="12" fill="#000" textLength="33.02" lengthAdjust="spacingAndGlyphs">eurusd</text>
<text x="643.24" y="635" font-size="12" fill="#000" textLength="39.04" lengthAdjust="spacingAndGlyphs">1.16584</text>
<text x="734.24" y="635" font-size="12" fill="#000" textLength="39.04" lengthAdjust="spacingAndGlyphs">1.16634</text>
<text x="825.24" y="635" font-size="12" fill="#000" textLength="39.04" lengthAdjust="spacingAndGlyphs">0.00000</text>
<text x="965.21" y="635" font-size="12" fill="#000" textLength="99.09" lengthAdjust="spacingAndGlyphs">2025.10.16 08:23:39</text>
<text x="1116.24" y="635" font-size="12" fill="#000" textLength="39.04" lengthAdjust="spacingAndGlyphs">1.16497</text>
<text x="1225.24" y="635" font-size="12" fill="#000" textLength="21.02" lengthAdjust="spacingAndGlyphs">0.00</text>
<text x="1328.24" y="635" font-size="12" fill="#000" textLength="21.02" lengthAdjust="spacingAndGlyphs">1.74</text>
<rect x="24" y="641" width="1329" height="20" fill="#EBEBEB"/>
<rect x="24" y="641" width="1329" height="1" fill="#D0D0D0"/>
<rect x="140" y="641" width="1" height="20" fill="#D0D0D0"/>
<rect x="340" y="641" width="1" height="20" fill="#D0D0D0"/>
<rect x="431" y="641" width="1" height="20" fill="#D0D0D0"/>
<rect x="503" y="641" width="1" height="20" fill="#D0D0D0"/>
<rect x="594" y="641" width="1" height="20" fill="#D0D0D0"/>
<rect x="685" y="641" width="1" height="20" fill="#D0D0D0"/>
<rect x="776" y="641" width="1" height="20" fill="#D0D0D0"/>
<rect x="867" y="641" width="1" height="20" fill="#D0D0D0"/>
<rect x="1067" y="641" width="1" height="20" fill="#D0D0D0"/>
<rect x="1158" y="641" width="1" height="20" fill="#D0D0D0"/>
<rect x="1249" y="641" width="1" height="20" fill="#D0D0D0"/>
<path d="M28 644.6 h7.5 l3 3 v9.7 q0 1 -1 1 h-9.5 q-1 0 -1 -1 v-11.7 q0 -1 1 -1 z" fill="#F8F8F8" stroke="#555" stroke-width="1"/><circle cx="37.4" cy="655.1" r="3.3" fill="#E84A12" stroke="#A83008" stroke-width="0.7"/><circle cx="36.6" cy="654.2" r="1" fill="#FF9A70"/>
<text x="46.20" y="655" font-size="12" fill="#000" textLength="48.05" lengthAdjust="spacingAndGlyphs">35074260</text>
<text x="238.21" y="655" font-size="12" fill="#000" textLength="99.09" lengthAdjust="spacingAndGlyphs">2025.10.16 07:49:20</text>
<text x="412.10" y="655" font-size="12" fill="#000" textLength="16.20" lengthAdjust="spacingAndGlyphs">sell</text>
<text x="479.24" y="655" font-size="12" fill="#000" textLength="21.02" lengthAdjust="spacingAndGlyphs">0.02</text>
<text x="558.27" y="655" font-size="12" fill="#000" textLength="33.02" lengthAdjust="spacingAndGlyphs">eurusd</text>
<text x="643.24" y="655" font-size="12" fill="#000" textLength="39.04" lengthAdjust="spacingAndGlyphs">1.16540</text>
<text x="735.05" y="655" font-size="12" fill="#000" textLength="38.24" lengthAdjust="spacingAndGlyphs">1.16611</text>
<text x="825.24" y="655" font-size="12" fill="#000" textLength="39.04" lengthAdjust="spacingAndGlyphs">0.00000</text>
<text x="965.21" y="655" font-size="12" fill="#000" textLength="99.09" lengthAdjust="spacingAndGlyphs">2025.10.16 08:23:40</text>
<text x="1116.24" y="655" font-size="12" fill="#000" textLength="39.04" lengthAdjust="spacingAndGlyphs">1.16497</text>
<text x="1225.24" y="655" font-size="12" fill="#000" textLength="21.02" lengthAdjust="spacingAndGlyphs">0.00</text>
<text x="1328.24" y="655" font-size="12" fill="#000" textLength="21.02" lengthAdjust="spacingAndGlyphs">0.86</text>
<rect x="24" y="661" width="1329" height="20" fill="#C8C8C8"/>
<rect x="24" y="681" width="1329" height="2" fill="#F0F0F0"/>
<circle cx="34" cy="672.5" r="3.5" fill="#D8D8D8" stroke="#8C8C8C" stroke-width="1"/>
<text x="45.80" y="675" font-size="12" font-weight="bold" fill="#000" textLength="89.66" lengthAdjust="spacingAndGlyphs">Profit/Loss: 0.86</text>
<text x="142.30" y="675" font-size="12" font-weight="bold" fill="#000" textLength="63.06" lengthAdjust="spacingAndGlyphs">Credit: 0.00</text>
<text x="212.40" y="675" font-size="12" font-weight="bold" fill="#000" textLength="86.54" lengthAdjust="spacingAndGlyphs">Deposit: 100.00</text>
<text x="305.30" y="675" font-size="12" font-weight="bold" fill="#000" textLength="105.05" lengthAdjust="spacingAndGlyphs">Withdrawal: -40.00</text>
<text x="1318.40" y="675" font-size="12" font-weight="bold" fill="#000" textLength="30.53" lengthAdjust="spacingAndGlyphs">60.86</text>
<rect x="1353" y="536" width="12" height="147" fill="#F0F0F0"/>
<rect x="1353" y="633" width="12" height="36" fill="#CDCDCD"/>
<path d="M1356 549.5 l4 -4 l4 4" stroke="#606060" stroke-width="1.5" fill="none"/>
<path d="M1356 676 l4 4 l4 -4" stroke="#606060" stroke-width="1.5" fill="none"/>
<text x="1073.00" y="669" font-size="20" fill="#909090" textLength="156.53" lengthAdjust="spacingAndGlyphs" fill-opacity="0.6">Activate Windows</text>
<text x="1073.00" y="689" font-size="13" fill="#909090" textLength="233.01" lengthAdjust="spacingAndGlyphs" fill-opacity="0.6">Go to Settings to activate Windows.</text>
</svg>
</body></html>
